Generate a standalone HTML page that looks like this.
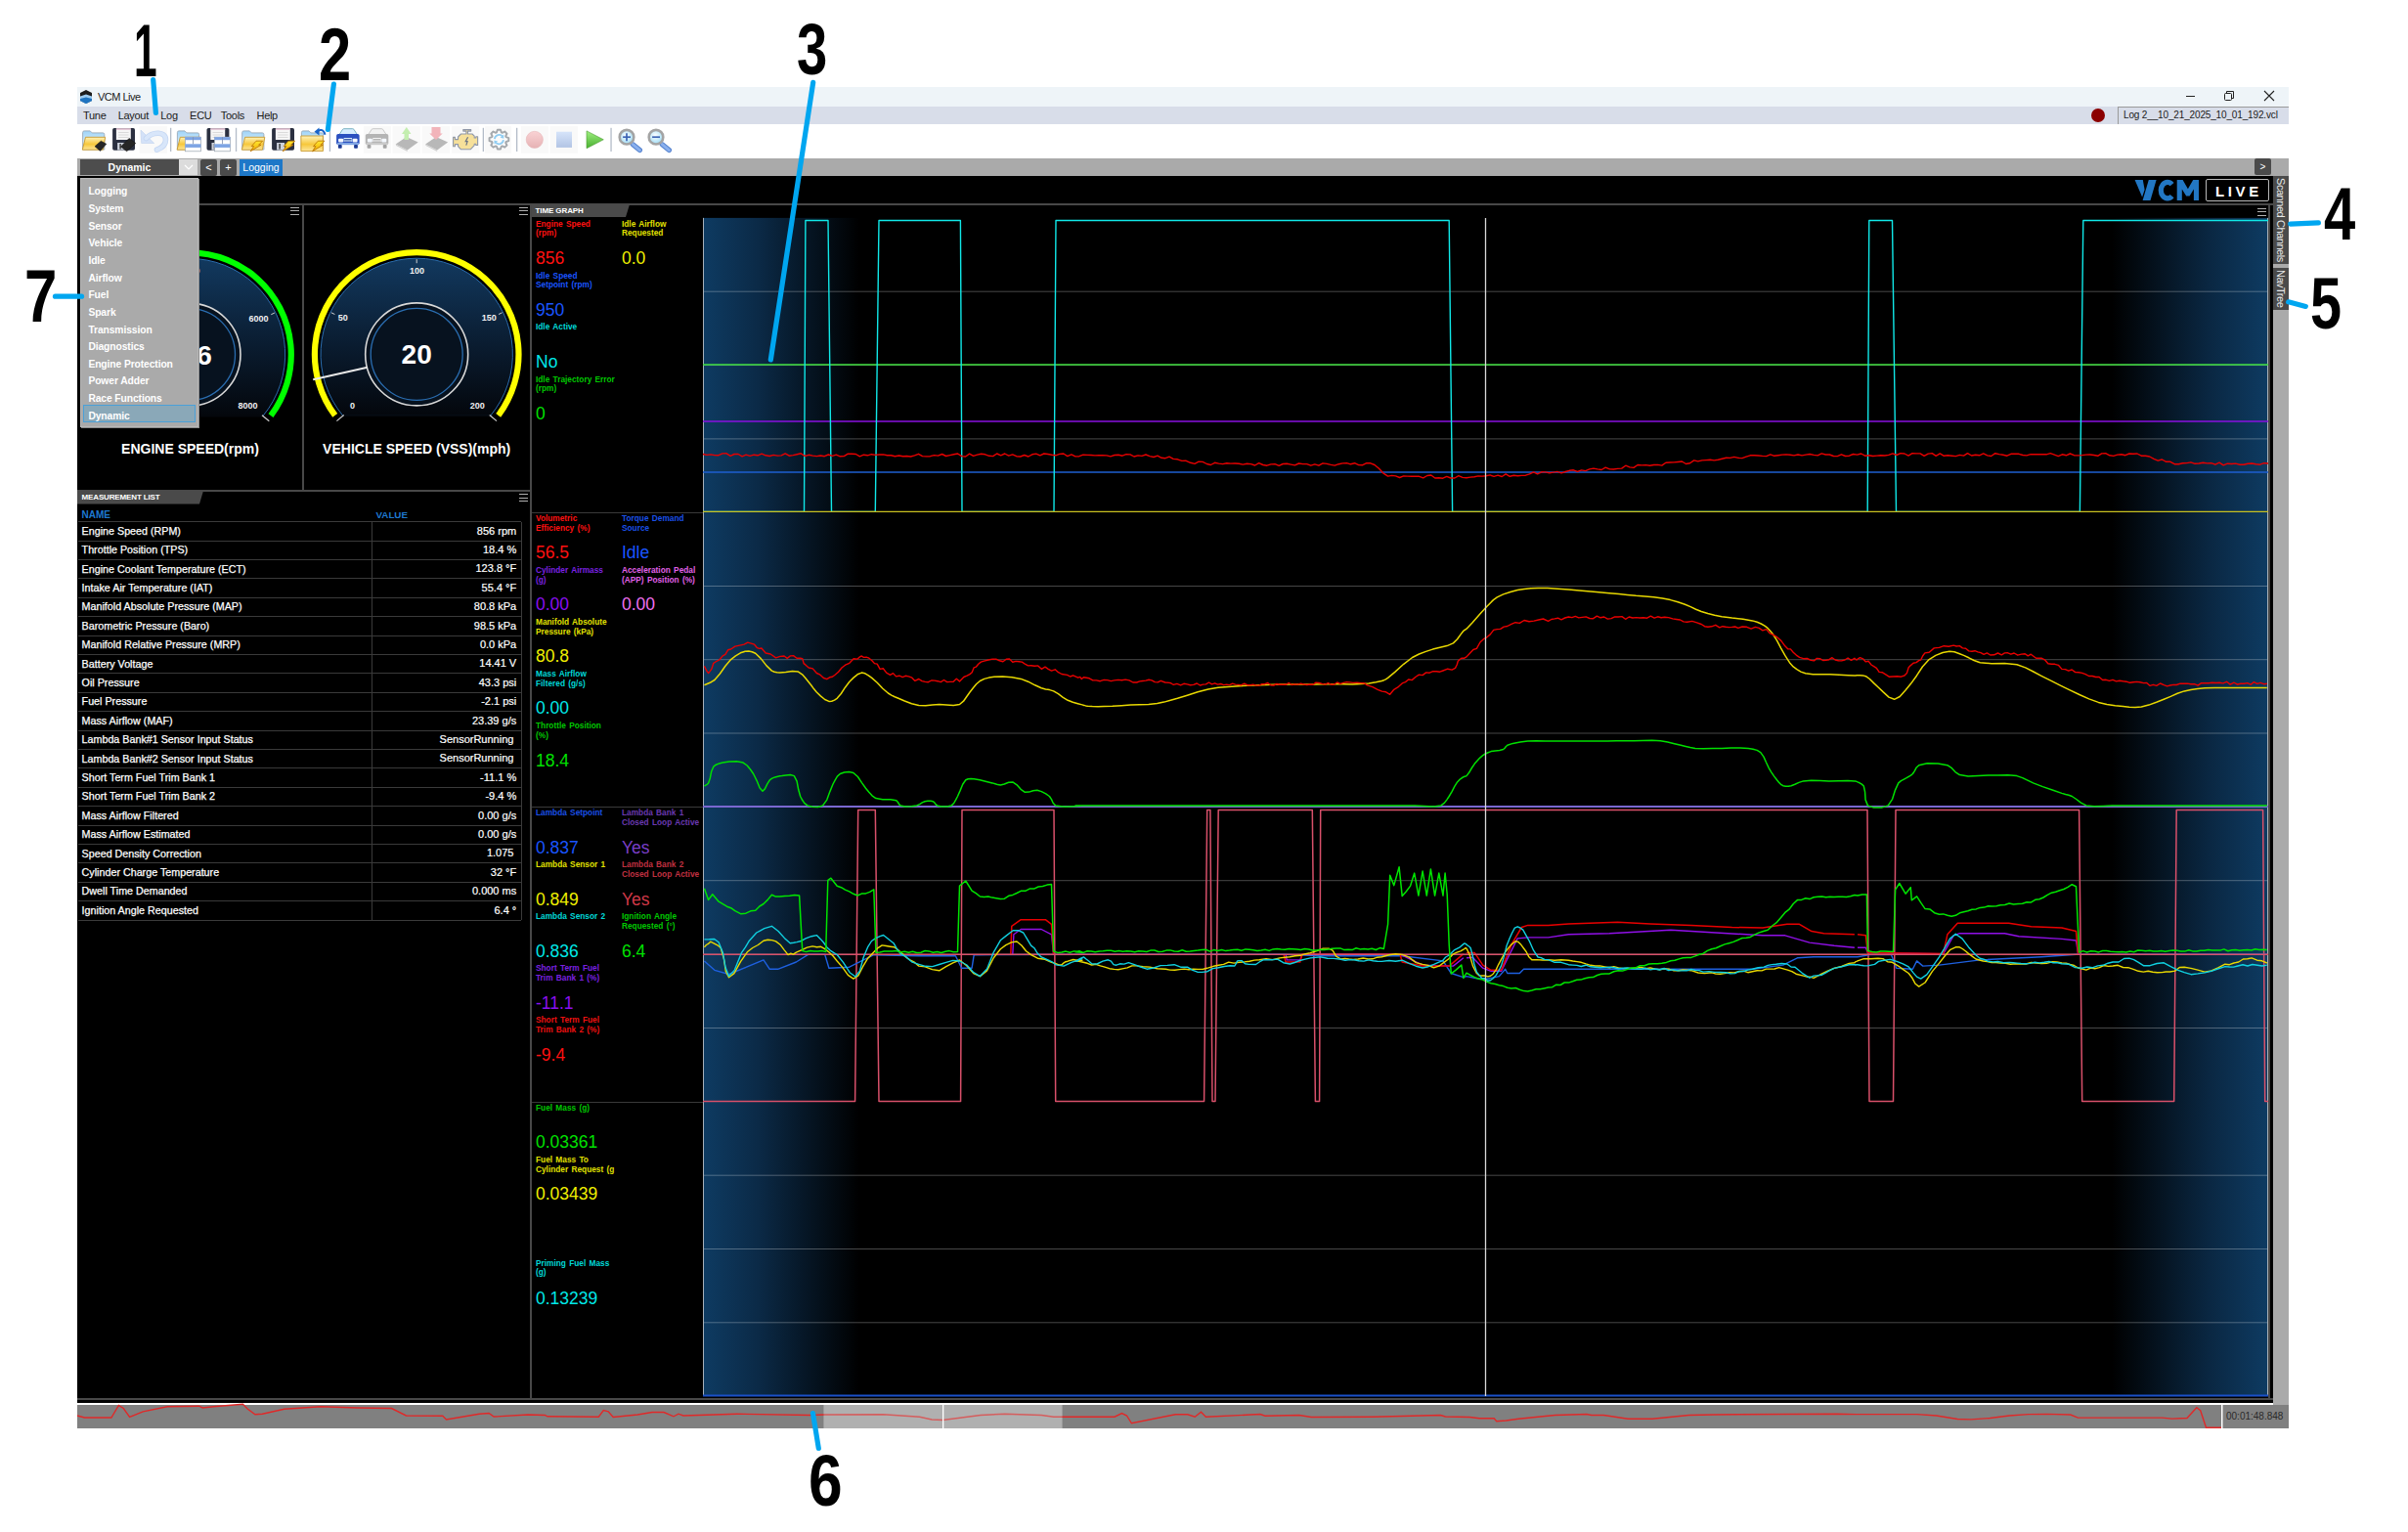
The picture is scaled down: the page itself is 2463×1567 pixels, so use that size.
<!DOCTYPE html><html><head><meta charset="utf-8"><title>VCM Live</title><style>
*{margin:0;padding:0;box-sizing:border-box}
html,body{width:2463px;height:1567px;overflow:hidden;background:#fff;font-family:"Liberation Sans", sans-serif}
.a{position:absolute}
.t{position:absolute;white-space:nowrap;line-height:1}
</style></head><body>
<div class="a" style="left:79px;top:89px;width:2262px;height:20px;background:#eef4f8;"></div>
<div class="a" style="left:79px;top:109px;width:2262px;height:18px;background:#d8dde9;"></div>
<div class="a" style="left:79px;top:127px;width:2262px;height:35px;background:#ffffff;"></div>
<div class="a" style="left:79px;top:162px;width:2262px;height:18px;background:#aaaaaa;"></div>
<div class="a" style="left:79px;top:180px;width:2246px;height:1255px;background:#000;"></div>
<div class="a" style="left:2325px;top:180px;width:16px;height:1257px;background:#aaaaaa;"></div>
<div class="a" style="left:79px;top:1435px;width:2246px;height:2px;background:#ffffff;"></div>
<div class="a" style="left:79px;top:1437px;width:2262px;height:24px;background:#808080;"></div>
<svg class="a" style="left:81px;top:92px" width="14" height="14" viewBox="0 0 14 14"><polygon points="7,0 13,3 13,11 7,14 1,11 1,3" fill="#1c1c1c"/><polygon points="1,6.5 7,4.5 13,6.5 13,11 7,14 1,11" fill="#9ccbf0"/><polygon points="1,9 7,7.5 13,9 13,11 7,14 1,11" fill="#1f74c0"/></svg>
<div class="t" style="left:100.0px;top:94.2px;font-size:11px;color:#1a1a1a;font-weight:400;letter-spacing:-0.5px;">VCM Live</div>
<div class="a" style="left:2236px;top:98px;width:9px;height:1px;background:#222;"></div>
<svg class="a" style="left:2274px;top:92px" width="12" height="12" viewBox="0 0 12 12"><rect x="1.5" y="3.5" width="7" height="7" rx="1" fill="none" stroke="#222" stroke-width="1"/><path d="M3.5 3.5V1.5H10.5V8.5H8.5" fill="none" stroke="#222" stroke-width="1"/></svg>
<svg class="a" style="left:2315px;top:92px" width="12" height="12" viewBox="0 0 12 12"><path d="M1 1L11 11M11 1L1 11" stroke="#222" stroke-width="1.1"/></svg>
<div class="t" style="left:85.0px;top:112.6px;font-size:11px;color:#1a1a1a;font-weight:400;letter-spacing:-0.3px;">Tune</div>
<div class="t" style="left:120.7px;top:112.6px;font-size:11px;color:#1a1a1a;font-weight:400;letter-spacing:-0.3px;">Layout</div>
<div class="t" style="left:164.3px;top:112.6px;font-size:11px;color:#1a1a1a;font-weight:400;letter-spacing:-0.3px;">Log</div>
<div class="t" style="left:194.1px;top:112.6px;font-size:11px;color:#1a1a1a;font-weight:400;letter-spacing:-0.3px;">ECU</div>
<div class="t" style="left:225.8px;top:112.6px;font-size:11px;color:#1a1a1a;font-weight:400;letter-spacing:-0.3px;">Tools</div>
<div class="t" style="left:262.5px;top:112.6px;font-size:11px;color:#1a1a1a;font-weight:400;letter-spacing:-0.3px;">Help</div>
<div class="a" style="left:2139px;top:111px;width:14px;height:14px;border-radius:50%;background:#8b0000"></div>
<div class="a" style="left:2166px;top:109px;width:175px;height:18px;border-left:1px solid #9a9a9a;border-top:1px solid #9a9a9a;background:#d8dde9"></div>
<div class="t" style="left:2172.0px;top:113.0px;font-size:10px;color:#1a1a1a;font-weight:400;letter-spacing:-0.15px;">Log 2__10_21_2025_10_01_192.vcl</div>
<svg class="a" style="left:0;top:0" width="720" height="170" viewBox="0 0 720 170"><defs><linearGradient id="fy" x1="0" y1="0" x2="0" y2="1"><stop offset="0" stop-color="#fff2b8"/><stop offset="0.55" stop-color="#f7c83c"/><stop offset="1" stop-color="#fde69a"/></linearGradient><linearGradient id="fb" x1="0" y1="0" x2="0" y2="1"><stop offset="0" stop-color="#9fd4f8"/><stop offset="1" stop-color="#f2f8fd"/></linearGradient><linearGradient id="bolt" x1="0" y1="0" x2="0" y2="1"><stop offset="0" stop-color="#ffe830"/><stop offset="1" stop-color="#f0a800"/></linearGradient><linearGradient id="rg" x1="0" y1="0" x2="0" y2="1"><stop offset="0" stop-color="#f9d2d4"/><stop offset="1" stop-color="#e6b2b4"/></linearGradient><linearGradient id="bq" x1="0" y1="0" x2="0" y2="1"><stop offset="0" stop-color="#d6e4fa"/><stop offset="1" stop-color="#b2c4e4"/></linearGradient><linearGradient id="gg" x1="0" y1="0" x2="0" y2="1"><stop offset="0" stop-color="#a0f080"/><stop offset="1" stop-color="#48b030"/></linearGradient><radialGradient id="lens" cx="0.45" cy="0.4" r="0.6"><stop offset="0" stop-color="#ffffff"/><stop offset="1" stop-color="#9edcf6"/></radialGradient></defs><rect x="142.7" y="129.2" width="28.4" height="27.6" fill="#f9f9f9"/><rect x="372" y="129.2" width="28.0" height="27.6" fill="#f9f9f9"/><rect x="401.5" y="129.2" width="28.5" height="27.6" fill="#f9f9f9"/><rect x="431.6" y="129.2" width="28.4" height="27.6" fill="#f9f9f9"/><rect x="462" y="129.2" width="28.4" height="27.6" fill="#f9f9f9"/><rect x="496" y="129.2" width="27.0" height="27.6" fill="#f9f9f9"/><rect x="532.9" y="129.2" width="28.0" height="27.6" fill="#f9f9f9"/><rect x="562.5" y="129.2" width="28.4" height="27.6" fill="#f9f9f9"/><rect x="174.0" y="130.8" width="1.3" height="24.2" fill="#b4bcc8"/><rect x="240.9" y="130.8" width="1.3" height="24.2" fill="#b4bcc8"/><rect x="336.8" y="130.8" width="1.3" height="24.2" fill="#b4bcc8"/><rect x="493.7" y="130.8" width="1.3" height="24.2" fill="#b4bcc8"/><rect x="528.0" y="130.8" width="1.3" height="24.2" fill="#b4bcc8"/><rect x="624.4" y="130.8" width="1.3" height="24.2" fill="#b4bcc8"/><path d="M84.6,135.5 q0,-1.6 1.6,-1.6 h6 l2,2 h11 q1.6,0 1.6,1.6 v15.5 h-22.2 z" fill="url(#fb)" stroke="#98a8b8" stroke-width="0.9"/><path d="M87.5,140.3 h20.2 l-2.4,12.9 h-21 z" fill="url(#fy)" stroke="#c89a30" stroke-width="0.9"/><polygon points="97,149.7 103.3,144.2 108.8,147.3 102.5,154.4" fill="#262626" stroke="#111" stroke-width="0.5"/><rect x="115.1" y="131" width="22.9" height="22.8" rx="1.8" fill="#2b3040"/><rect x="118.89999999999999" y="131.4" width="14.9" height="11.6" fill="#f6f6f6"/><rect x="118.89999999999999" y="131.4" width="14.9" height="1.3" fill="#dcb4c8"/><path d="M121.1,135.5h10.5M121.1,138h10.5M121.1,140.5h10.5" stroke="#cfcfcf" stroke-width="0.7"/><rect x="120.1" y="146" width="8" height="7.5" fill="#cdd2dc"/><rect x="122.3" y="147" width="1.6" height="5.5" fill="#444"/><polygon points="123.4,150.1 132.1,141.4 138.8,146.5 129.7,154.8" fill="#262626" stroke="#111" stroke-width="0.5"/><polygon points="144,133.1 144.7,146.5 157.7,146.5" fill="#d4e2f8" stroke="#c0d2ee" stroke-width="0.6"/><path d="M149.5,141.5 C156,134.5 169.5,134 169.5,143 C169.5,148 165,151.5 160.5,153.2" fill="none" stroke="#c4d6f2" stroke-width="5.6" stroke-linecap="round"/><path d="M149.5,141.5 C156,134.5 169.5,134 169.5,143 C169.5,148 165,151.5 160.5,153.2" fill="none" stroke="#d8e6fa" stroke-width="4" stroke-linecap="round"/><path d="M181.4,135.5 q0,-1.6 1.6,-1.6 h6 l2,2 h11 q1.6,0 1.6,1.6 v15.5 h-22.2 z" fill="url(#fb)" stroke="#98a8b8" stroke-width="0.9"/><path d="M184.3,140.3 h20.2 l-2.4,12.9 h-21 z" fill="url(#fy)" stroke="#c89a30" stroke-width="0.9"/><rect x="189.4" y="140.2" width="16" height="14.6" fill="#fdfdfd" stroke="#9aa4b0" stroke-width="0.7"/><rect x="189.4" y="140.2" width="16" height="3" fill="#7da4e4"/><rect x="189.4" y="147.3" width="16" height="3.6" fill="#7da4e4"/><rect x="197.0" y="140.2" width="0.8" height="7.1" fill="#8090b0"/><rect x="211.5" y="131" width="22.9" height="22.8" rx="1.8" fill="#2b3040"/><rect x="215.3" y="131.4" width="14.9" height="11.6" fill="#f6f6f6"/><rect x="215.3" y="131.4" width="14.9" height="1.3" fill="#dcb4c8"/><path d="M217.5,135.5h10.5M217.5,138h10.5M217.5,140.5h10.5" stroke="#cfcfcf" stroke-width="0.7"/><rect x="216.5" y="146" width="8" height="7.5" fill="#cdd2dc"/><rect x="218.7" y="147" width="1.6" height="5.5" fill="#444"/><rect x="219.4" y="140.2" width="16" height="14.6" fill="#fdfdfd" stroke="#9aa4b0" stroke-width="0.7"/><rect x="219.4" y="140.2" width="16" height="3" fill="#7da4e4"/><rect x="219.4" y="147.3" width="16" height="3.6" fill="#7da4e4"/><rect x="227.0" y="140.2" width="0.8" height="7.1" fill="#8090b0"/><path d="M247.7,135.5 q0,-1.6 1.6,-1.6 h6 l2,2 h11 q1.6,0 1.6,1.6 v15.5 h-22.2 z" fill="url(#fb)" stroke="#98a8b8" stroke-width="0.9"/><path d="M250.6,140.3 h20.2 l-2.4,12.9 h-21 z" fill="url(#fy)" stroke="#c89a30" stroke-width="0.9"/><polygon points="262.0,144.2 268.6,144.2 264.6,148.2 267.0,148.2 256.2,154.8 259.6,149.6 257.2,149.6" fill="url(#bolt)" stroke="#b87000" stroke-width="0.8" stroke-linejoin="round"/><rect x="278.1" y="131" width="22.9" height="22.8" rx="1.8" fill="#2b3040"/><rect x="281.90000000000003" y="131.4" width="14.9" height="11.6" fill="#f6f6f6"/><rect x="281.90000000000003" y="131.4" width="14.9" height="1.3" fill="#dcb4c8"/><path d="M284.1,135.5h10.5M284.1,138h10.5M284.1,140.5h10.5" stroke="#cfcfcf" stroke-width="0.7"/><rect x="283.1" y="146" width="8" height="7.5" fill="#cdd2dc"/><rect x="285.3" y="147" width="1.6" height="5.5" fill="#444"/><polygon points="295.0,144.2 301.6,144.2 297.6,148.2 300.0,148.2 289.2,154.8 292.6,149.6 290.2,149.6" fill="url(#bolt)" stroke="#b87000" stroke-width="0.8" stroke-linejoin="round"/><path d="M308.4,135.5 q0,-1.6 1.6,-1.6 h6 l2,2 h11 q1.6,0 1.6,1.6 v15.5 h-22.2 z" fill="url(#fb)" stroke="#98a8b8" stroke-width="0.9"/><path d="M307.9,139 h22.5 v15.6 h-22.5 z" fill="url(#fy)" stroke="#c89a30" stroke-width="0.9"/><polygon points="325.3,144.2 331.9,144.2 327.9,148.2 330.3,148.2 319.5,154.8 322.9,149.6 320.5,149.6" fill="url(#bolt)" stroke="#b87000" stroke-width="0.8" stroke-linejoin="round"/><path d="M324.5,135.5 C326,132 331,131.5 332.5,137.8" fill="none" stroke="#1a64c8" stroke-width="2"/><polygon points="321.5,134.8 326.5,130.4 326.5,138.4" fill="#1a64c8"/><path d="M347.1,137.5 l3.4,-5.2 q0.5,-0.6 1.3,-0.6 h8.8 q0.8,0 1.3,0.6 l3.4,5.2 z" fill="#d6ecff" stroke="#5aa0b0" stroke-width="0.8"/><rect x="344.1" y="137" width="23.5" height="11" rx="1.8" fill="#2b50c0"/><rect x="351.6" y="141" width="8.5" height="4" fill="#d6ecff"/><path d="M352.1,142.5h7.5M352.1,144h7.5" stroke="#1c3a94" stroke-width="0.8"/><rect x="346.1" y="141.8" width="5" height="3.6" rx="1" fill="#f4f8ff"/><rect x="360.6" y="141.8" width="5" height="3.6" rx="1" fill="#f4f8ff"/><rect x="344.90000000000003" y="146" width="22" height="2.2" fill="#80a6e4"/><rect x="345.90000000000003" y="148" width="3.8" height="3.8" rx="0.8" fill="#1c3a94"/><rect x="362.1" y="148" width="3.8" height="3.8" rx="0.8" fill="#1c3a94"/><path d="M376.8,137.5 l3.4,-5.2 q0.5,-0.6 1.3,-0.6 h8.8 q0.8,0 1.3,0.6 l3.4,5.2 z" fill="#f2f2f2" stroke="#bdbdbd" stroke-width="0.8"/><rect x="373.8" y="137" width="23.5" height="11" rx="1.8" fill="#b4b4b4"/><rect x="381.3" y="141" width="8.5" height="4" fill="#f2f2f2"/><path d="M381.8,142.5h7.5M381.8,144h7.5" stroke="#a4a4a4" stroke-width="0.8"/><rect x="375.8" y="141.8" width="5" height="3.6" rx="1" fill="#f4f8ff"/><rect x="390.3" y="141.8" width="5" height="3.6" rx="1" fill="#f4f8ff"/><rect x="374.6" y="146" width="22" height="2.2" fill="#cacaca"/><rect x="375.6" y="148" width="3.8" height="3.8" rx="0.8" fill="#a4a4a4"/><rect x="391.8" y="148" width="3.8" height="3.8" rx="0.8" fill="#a4a4a4"/><polygon points="404.7,147.5 415.7,140 427.7,145.5 416.7,153.6" fill="#b8b8b8"/><polygon points="404.7,147.5 416.7,153.6 416.7,155 405.2,149" fill="#d0d0d0"/><polygon points="411,137 415.8,130 420.5,137 418,137 418,143 413.5,143 413.5,137" fill="#c4eeb0"/><polygon points="435.1,147.5 446.1,140 458.1,145.5 447.1,153.6" fill="#b8b8b8"/><polygon points="435.1,147.5 447.1,153.6 447.1,155 435.6,149" fill="#d0d0d0"/><polygon points="441.5,130 450.5,130 450.5,136.5 452.7,136.5 446,143 439.3,136.5 441.5,136.5" fill="#f2b4ba"/><path d="M473.8,132.6 H481.7 V134.1 H478.5 V137 H483 L485.2,139.2 V141 H486.8 V139.8 H488.6 V148.5 H486.8 V147.3 H485.2 V148.6 L481.2,152.8 H471.5 L468.5,149.6 V147.6 H465.4 V149.8 H463.6 V140.4 H465.4 V142.6 H468.5 V140 L471.5,137 H476.9 V134.1 H473.8 Z" fill="#f6e09a" stroke="#9098a8" stroke-width="1.1" stroke-linejoin="round"/><path d="M478.6,140.2 l-2.4,4.4 h1.9 l-1.3,4" fill="none" stroke="#6c7484" stroke-width="1.2"/><polygon points="517.61,140.19 520.28,141.04 520.28,144.16 517.61,145.01 517.20,145.99 518.49,148.48 516.28,150.69 513.79,149.40 512.81,149.81 511.96,152.48 508.84,152.48 507.99,149.81 507.01,149.40 504.52,150.69 502.31,148.48 503.60,145.99 503.19,145.01 500.52,144.16 500.52,141.04 503.19,140.19 503.60,139.21 502.31,136.72 504.52,134.51 507.01,135.80 507.99,135.39 508.84,132.72 511.96,132.72 512.81,135.39 513.79,135.80 516.28,134.51 518.49,136.72 517.20,139.21" fill="#fbfbfb" stroke="#a4a8ac" stroke-width="1.9" stroke-linejoin="round"/><path d="M505.9,142.1 a4.6,4.6 0 0 1 8.2,-2.4" fill="none" stroke="#90cdf2" stroke-width="1.8"/><polygon points="515.1999999999999,137.6 515.4,141.79999999999998 511.59999999999997,140.79999999999998" fill="#90cdf2"/><path d="M514.9,143.1 a4.6,4.6 0 0 1 -8.2,2.4" fill="none" stroke="#90cdf2" stroke-width="1.8"/><polygon points="505.59999999999997,147.6 505.4,143.4 509.2,144.4" fill="#90cdf2"/><circle cx="546.8" cy="142.9" r="8.6" fill="url(#rg)" stroke="#e2b0b2" stroke-width="0.5"/><rect x="569" y="134.7" width="16" height="16.2" fill="url(#bq)"/><polygon points="600,133.9 617.3,142.8 600,151.7" fill="url(#gg)" stroke="#4a9a30" stroke-width="0.6" stroke-linejoin="round"/><path d="M647.3,147.7 L654.4,153.6" stroke="#5a86d0" stroke-width="5.2" stroke-linecap="round"/><path d="M647.3,147.7 L654.4,153.6" stroke="#8ab0ee" stroke-width="3" stroke-linecap="round"/><circle cx="641" cy="140.2" r="7.3" fill="url(#lens)" stroke="#a4a4a4" stroke-width="2.6"/><path d="M637.1,140.2h7.9" stroke="#3c64b4" stroke-width="1.7"/><path d="M641,136.3v7.9" stroke="#3c64b4" stroke-width="1.7"/><path d="M677.3,147.7 L684.4,153.6" stroke="#5a86d0" stroke-width="5.2" stroke-linecap="round"/><path d="M677.3,147.7 L684.4,153.6" stroke="#8ab0ee" stroke-width="3" stroke-linecap="round"/><circle cx="671" cy="140.2" r="7.3" fill="url(#lens)" stroke="#a4a4a4" stroke-width="2.6"/><path d="M667.1,140.2h7.9" stroke="#3c64b4" stroke-width="1.7"/></svg>
<div class="a" style="left:82px;top:163px;width:101px;height:16px;background:#4d4d4d;"></div>
<div class="t" style="left:132.5px;transform:translateX(-50%);top:166.2px;font-size:10.5px;color:#fff;font-weight:700;letter-spacing:0px;">Dynamic</div>
<div class="a" style="left:183px;top:163px;width:19px;height:16px;background:#dcdcdc;"></div>
<svg class="a" style="left:188px;top:168px" width="10" height="6" viewBox="0 0 10 6"><path d="M1 1l4 4 4-4" fill="none" stroke="#fff" stroke-width="1.2"/></svg>
<div class="a" style="left:205px;top:163px;width:17px;height:17px;background:#4a4a4a;border-radius:2px"></div>
<div class="t" style="left:213.5px;transform:translateX(-50%);top:166.2px;font-size:11px;color:#fff;font-weight:400;letter-spacing:0px;">&lt;</div>
<div class="a" style="left:225px;top:163px;width:17px;height:17px;background:#4a4a4a;border-radius:2px"></div>
<div class="t" style="left:233.5px;transform:translateX(-50%);top:166.2px;font-size:11px;color:#fff;font-weight:400;letter-spacing:0px;">+</div>
<div class="a" style="left:245px;top:163px;width:44px;height:17px;background:#1e78c8;"></div>
<div class="t" style="left:248.3px;top:166.2px;font-size:10.5px;color:#fff;font-weight:400;letter-spacing:0px;">Logging</div>
<div class="a" style="left:2306px;top:162px;width:17px;height:17px;background:#4a4a4a;border-radius:2px"></div>
<div class="t" style="left:2314.5px;transform:translateX(-50%);top:166.2px;font-size:10px;color:#fff;font-weight:400;letter-spacing:0px;">&gt;</div>
<div class="a" style="left:2325px;top:180px;width:16px;height:90px;background:#4a4a4a;"></div>
<div class="a" style="left:2325px;top:274px;width:16px;height:43px;background:#4a4a4a;"></div>
<div class="t" style="left:2327px;top:182px;font-size:11px;color:#e8e8e8;writing-mode:vertical-rl;letter-spacing:-0.45px">Scanned Channels</div>
<div class="t" style="left:2327px;top:276px;font-size:11px;color:#e8e8e8;writing-mode:vertical-rl;letter-spacing:-0.5px">NavTree</div>
<svg class="a" style="left:0;top:0" width="2463" height="220" viewBox="0 0 2463 220"><polygon points="2183.6,184.1 2191.8,184.1 2193.6,194 2191.1,201.6" fill="#2277c4"/><polygon points="2197.8,184.1 2205.6,184.1 2199.5,205 2191.6,205" fill="#2277c4"/><path d="M2221.6,188.6 A6.7,8.3 0 1 0 2221.6,200.6" fill="none" stroke="#2277c4" stroke-width="5.2"/><polygon points="2226.7,205 2226.7,184.1 2232.6,184.1 2237.9,193.2 2243.2,184.1 2249,184.1 2249,205 2243.9,205 2243.9,193.5 2239.6,200.6 2236.2,200.6 2231.8,193.5 2231.8,205" fill="#2277c4"/></svg>
<div class="a" style="left:2256px;top:183px;width:65px;height:23px;border:1.5px solid #b8b8b8;border-radius:2px"></div>
<div class="t" style="left:2266.0px;top:187.6px;font-size:15px;color:#fff;font-weight:700;letter-spacing:3.6px;">LIVE</div>
<div class="a" style="left:79px;top:208px;width:2246px;height:2px;background:#484848;"></div>
<div class="a" style="left:309px;top:208px;width:2px;height:294px;background:#484848;"></div>
<div class="a" style="left:542px;top:208px;width:2px;height:1224px;background:#484848;"></div>
<div class="a" style="left:79px;top:501px;width:464px;height:2px;background:#484848;"></div>
<div class="a" style="left:79px;top:1430px;width:2246px;height:2px;background:#484848;"></div>
<div class="a" style="left:2320px;top:208px;width:2px;height:1224px;background:#484848;"></div>
<div class="a" style="left:297px;top:211.5px;width:9px;height:1.3px;background:#b0b0b0;"></div>
<div class="a" style="left:297px;top:215.1px;width:9px;height:1.3px;background:#b0b0b0;"></div>
<div class="a" style="left:297px;top:218.7px;width:9px;height:1.3px;background:#b0b0b0;"></div>
<div class="a" style="left:531px;top:211.5px;width:9px;height:1.3px;background:#b0b0b0;"></div>
<div class="a" style="left:531px;top:215.1px;width:9px;height:1.3px;background:#b0b0b0;"></div>
<div class="a" style="left:531px;top:218.7px;width:9px;height:1.3px;background:#b0b0b0;"></div>
<div class="a" style="left:531px;top:505.0px;width:9px;height:1.3px;background:#b0b0b0;"></div>
<div class="a" style="left:531px;top:508.6px;width:9px;height:1.3px;background:#b0b0b0;"></div>
<div class="a" style="left:531px;top:512.2px;width:9px;height:1.3px;background:#b0b0b0;"></div>
<div class="a" style="left:2309px;top:212.5px;width:9px;height:1.3px;background:#b0b0b0;"></div>
<div class="a" style="left:2309px;top:216.1px;width:9px;height:1.3px;background:#b0b0b0;"></div>
<div class="a" style="left:2309px;top:219.7px;width:9px;height:1.3px;background:#b0b0b0;"></div>
<svg class="a" style="left:544px;top:209px" width="100" height="14"><path d="M0 0H100L96 13H0z" fill="#4a4a4a"/></svg>
<div class="t" style="left:547.5px;top:212.1px;font-size:8px;color:#fff;font-weight:700;letter-spacing:-0.1px;">TIME GRAPH</div>
<svg class="a" style="left:79px;top:502px" width="130" height="14"><path d="M0 0H129L125 13.5H0z" fill="#4a4a4a"/></svg>
<div class="t" style="left:83.6px;top:504.7px;font-size:8px;color:#fff;font-weight:700;letter-spacing:-0.15px;">MEASUREMENT LIST</div>
<svg class="a" style="left:0;top:0" width="2463" height="600" viewBox="0 0 2463 600"><defs><linearGradient id="dg426" x1="0" y1="0" x2="0" y2="1"><stop offset="0" stop-color="#12395f"/><stop offset="0.55" stop-color="#0a1c30"/><stop offset="1" stop-color="#04070c"/></linearGradient></defs><path d="M350.8,425.3 A98.2,98.2 0 1 1 501.6,425.3 Z" fill="url(#dg426)" stroke="#2a6db0" stroke-width="1"/><path d="M350.8,425.3 L501.6,425.3" stroke="#04070c" stroke-width="2"/><path d="M342.7,424.9 A104.3,104.3 0 1 1 509.7,424.9" fill="none" stroke="#ffff00" stroke-width="6.2"/><path d="M351.7,424.5 L344.4,430.6" stroke="#cfcfcf" stroke-width="1.2"/><path d="M500.7,424.5 L508.0,430.6" stroke="#cfcfcf" stroke-width="1.2"/><path d="M426.2,265.2 L426.2,269.2" stroke="#cfcfcf" stroke-width="1"/><path d="M338.8,319.8 L342.4,321.5" stroke="#cfcfcf" stroke-width="1"/><path d="M513.6,319.8 L510.0,321.5" stroke="#cfcfcf" stroke-width="1"/><circle cx="426.2" cy="362.4" r="52.5" fill="#07121f" stroke="#d8d8d8" stroke-width="1.6"/><circle cx="426.2" cy="362.4" r="47" fill="none" stroke="#2a6db0" stroke-width="1.3"/><path d="M320.2,388.2 L375.8,375.7" stroke="#e8e8e8" stroke-width="2"/></svg>
<div class="t" style="left:426.5px;transform:translateX(-50%);top:273.2px;font-size:9px;color:#f0f0f0;font-weight:700;letter-spacing:0px;">100</div>
<div class="t" style="left:350.7px;transform:translateX(-50%);top:320.7px;font-size:9px;color:#f0f0f0;font-weight:700;letter-spacing:0px;">50</div>
<div class="t" style="left:500.3px;transform:translateX(-50%);top:320.7px;font-size:9px;color:#f0f0f0;font-weight:700;letter-spacing:0px;">150</div>
<div class="t" style="left:360.4px;transform:translateX(-50%);top:411.0px;font-size:9px;color:#f0f0f0;font-weight:700;letter-spacing:0px;">0</div>
<div class="t" style="left:488.3px;transform:translateX(-50%);top:411.0px;font-size:9px;color:#f0f0f0;font-weight:700;letter-spacing:0px;">200</div>
<div class="t" style="left:426.2px;transform:translateX(-50%);top:349.4px;font-size:28px;color:#fff;font-weight:700;letter-spacing:0px;">20</div>
<div class="t" style="left:426.2px;transform:translateX(-50%);top:451.6px;font-size:14px;color:#fff;font-weight:700;letter-spacing:0px;">VEHICLE SPEED (VSS)(mph)</div>
<svg class="a" style="left:0;top:0" width="2463" height="600" viewBox="0 0 2463 600"><defs><linearGradient id="dg193" x1="0" y1="0" x2="0" y2="1"><stop offset="0" stop-color="#12395f"/><stop offset="0.55" stop-color="#0a1c30"/><stop offset="1" stop-color="#04070c"/></linearGradient></defs><path d="M118.1,425.5 A98.2,98.2 0 1 1 268.9,425.5 Z" fill="url(#dg193)" stroke="#2a6db0" stroke-width="1"/><path d="M118.1,425.5 L268.9,425.5" stroke="#04070c" stroke-width="2"/><path d="M110.0,425.1 A104.3,104.3 0 1 1 277.0,425.1" fill="none" stroke="#00ff00" stroke-width="6.2"/><path d="M119.0,424.7 L111.7,430.8" stroke="#cfcfcf" stroke-width="1.2"/><path d="M268.0,424.7 L275.3,430.8" stroke="#cfcfcf" stroke-width="1.2"/><path d="M193.5,265.4 L193.5,269.4" stroke="#cfcfcf" stroke-width="1"/><path d="M106.1,320.0 L109.7,321.7" stroke="#cfcfcf" stroke-width="1"/><path d="M280.9,320.0 L277.3,321.7" stroke="#cfcfcf" stroke-width="1"/><circle cx="193.5" cy="362.6" r="52.5" fill="#07121f" stroke="#d8d8d8" stroke-width="1.6"/><circle cx="193.5" cy="362.6" r="47" fill="none" stroke="#2a6db0" stroke-width="1.3"/><path d="M88.2,388.2 L143.8,375.7" stroke="#e8e8e8" stroke-width="2"/></svg>
<div class="t" style="left:194.5px;transform:translateX(-50%);top:273.2px;font-size:9px;color:#f0f0f0;font-weight:700;letter-spacing:0px;">4000</div>
<div class="t" style="left:118.7px;transform:translateX(-50%);top:320.7px;font-size:9px;color:#f0f0f0;font-weight:700;letter-spacing:0px;">2000</div>
<div class="t" style="left:264.4px;transform:translateX(-50%);top:322.0px;font-size:9px;color:#f0f0f0;font-weight:700;letter-spacing:0px;">6000</div>
<div class="t" style="left:128.4px;transform:translateX(-50%);top:411.0px;font-size:9px;color:#f0f0f0;font-weight:700;letter-spacing:0px;">0</div>
<div class="t" style="left:253.5px;transform:translateX(-50%);top:410.6px;font-size:9px;color:#f0f0f0;font-weight:700;letter-spacing:0px;">8000</div>
<div class="t" style="left:193.5px;transform:translateX(-50%);top:349.6px;font-size:28px;color:#fff;font-weight:700;letter-spacing:0px;">856</div>
<div class="t" style="left:194.5px;transform:translateX(-50%);top:451.6px;font-size:14px;color:#fff;font-weight:700;letter-spacing:0px;">ENGINE SPEED(rpm)</div>
<div class="t" style="left:83.6px;top:521.7px;font-size:10px;color:#1e78d0;font-weight:700;letter-spacing:0px;">NAME</div>
<div class="t" style="left:384.5px;top:521.8px;font-size:9.8px;color:#1e78d0;font-weight:700;letter-spacing:0px;">VALUE</div>
<div class="a" style="left:80px;top:533px;width:453px;height:1px;background:#3a3a3a;"></div>
<div class="t" style="left:83.6px;top:537.6px;font-size:10.7px;color:#fff;font-weight:400;letter-spacing:0.02px;-webkit-text-stroke:0.25px #fff">Engine Speed (RPM)</div>
<div class="t" style="right:1934.8px;top:537.5px;font-size:11px;color:#fff;font-weight:400;letter-spacing:0px;-webkit-text-stroke:0.2px #fff">856 rpm</div>
<div class="a" style="left:80px;top:553px;width:453px;height:1px;background:#3a3a3a;"></div>
<div class="t" style="left:83.6px;top:557.0px;font-size:10.7px;color:#fff;font-weight:400;letter-spacing:0.02px;-webkit-text-stroke:0.25px #fff">Throttle Position (TPS)</div>
<div class="t" style="right:1934.8px;top:556.9px;font-size:11px;color:#fff;font-weight:400;letter-spacing:0px;-webkit-text-stroke:0.2px #fff">18.4 %</div>
<div class="a" style="left:80px;top:572px;width:453px;height:1px;background:#3a3a3a;"></div>
<div class="t" style="left:83.6px;top:576.5px;font-size:10.7px;color:#fff;font-weight:400;letter-spacing:0.02px;-webkit-text-stroke:0.25px #fff">Engine Coolant Temperature (ECT)</div>
<div class="t" style="right:1934.8px;top:576.3px;font-size:11px;color:#fff;font-weight:400;letter-spacing:0px;-webkit-text-stroke:0.2px #fff">123.8 °F</div>
<div class="a" style="left:80px;top:591px;width:453px;height:1px;background:#3a3a3a;"></div>
<div class="t" style="left:83.6px;top:595.9px;font-size:10.7px;color:#fff;font-weight:400;letter-spacing:0.02px;-webkit-text-stroke:0.25px #fff">Intake Air Temperature (IAT)</div>
<div class="t" style="right:1934.8px;top:595.7px;font-size:11px;color:#fff;font-weight:400;letter-spacing:0px;-webkit-text-stroke:0.2px #fff">55.4 °F</div>
<div class="a" style="left:80px;top:611px;width:453px;height:1px;background:#3a3a3a;"></div>
<div class="t" style="left:83.6px;top:615.3px;font-size:10.7px;color:#fff;font-weight:400;letter-spacing:0.02px;-webkit-text-stroke:0.25px #fff">Manifold Absolute Pressure (MAP)</div>
<div class="t" style="right:1934.8px;top:615.1px;font-size:11px;color:#fff;font-weight:400;letter-spacing:0px;-webkit-text-stroke:0.2px #fff">80.8 kPa</div>
<div class="a" style="left:80px;top:630px;width:453px;height:1px;background:#3a3a3a;"></div>
<div class="t" style="left:83.6px;top:634.7px;font-size:10.7px;color:#fff;font-weight:400;letter-spacing:0.02px;-webkit-text-stroke:0.25px #fff">Barometric Pressure (Baro)</div>
<div class="t" style="right:1934.8px;top:634.5px;font-size:11px;color:#fff;font-weight:400;letter-spacing:0px;-webkit-text-stroke:0.2px #fff">98.5 kPa</div>
<div class="a" style="left:80px;top:650px;width:453px;height:1px;background:#3a3a3a;"></div>
<div class="t" style="left:83.6px;top:654.1px;font-size:10.7px;color:#fff;font-weight:400;letter-spacing:0.02px;-webkit-text-stroke:0.25px #fff">Manifold Relative Pressure (MRP)</div>
<div class="t" style="right:1934.8px;top:653.9px;font-size:11px;color:#fff;font-weight:400;letter-spacing:0px;-webkit-text-stroke:0.2px #fff">0.0 kPa</div>
<div class="a" style="left:80px;top:669px;width:453px;height:1px;background:#3a3a3a;"></div>
<div class="t" style="left:83.6px;top:673.5px;font-size:10.7px;color:#fff;font-weight:400;letter-spacing:0.02px;-webkit-text-stroke:0.25px #fff">Battery Voltage</div>
<div class="t" style="right:1934.8px;top:673.3px;font-size:11px;color:#fff;font-weight:400;letter-spacing:0px;-webkit-text-stroke:0.2px #fff">14.41 V</div>
<div class="a" style="left:80px;top:688px;width:453px;height:1px;background:#3a3a3a;"></div>
<div class="t" style="left:83.6px;top:692.9px;font-size:10.7px;color:#fff;font-weight:400;letter-spacing:0.02px;-webkit-text-stroke:0.25px #fff">Oil Pressure</div>
<div class="t" style="right:1934.8px;top:692.7px;font-size:11px;color:#fff;font-weight:400;letter-spacing:0px;-webkit-text-stroke:0.2px #fff">43.3 psi</div>
<div class="a" style="left:80px;top:708px;width:453px;height:1px;background:#3a3a3a;"></div>
<div class="t" style="left:83.6px;top:712.3px;font-size:10.7px;color:#fff;font-weight:400;letter-spacing:0.02px;-webkit-text-stroke:0.25px #fff">Fuel Pressure</div>
<div class="t" style="right:1934.8px;top:712.1px;font-size:11px;color:#fff;font-weight:400;letter-spacing:0px;-webkit-text-stroke:0.2px #fff">-2.1 psi</div>
<div class="a" style="left:80px;top:727px;width:453px;height:1px;background:#3a3a3a;"></div>
<div class="t" style="left:83.6px;top:731.7px;font-size:10.7px;color:#fff;font-weight:400;letter-spacing:0.02px;-webkit-text-stroke:0.25px #fff">Mass Airflow (MAF)</div>
<div class="t" style="right:1934.8px;top:731.5px;font-size:11px;color:#fff;font-weight:400;letter-spacing:0px;-webkit-text-stroke:0.2px #fff">23.39 g/s</div>
<div class="a" style="left:80px;top:747px;width:453px;height:1px;background:#3a3a3a;"></div>
<div class="t" style="left:83.6px;top:751.1px;font-size:10.7px;color:#fff;font-weight:400;letter-spacing:0.02px;-webkit-text-stroke:0.25px #fff">Lambda Bank#1 Sensor Input Status</div>
<div class="t" style="right:1937.6px;top:751.0px;font-size:11px;color:#fff;font-weight:400;letter-spacing:0px;-webkit-text-stroke:0.2px #fff">SensorRunning</div>
<div class="a" style="left:80px;top:766px;width:453px;height:1px;background:#3a3a3a;"></div>
<div class="t" style="left:83.6px;top:770.5px;font-size:10.7px;color:#fff;font-weight:400;letter-spacing:0.02px;-webkit-text-stroke:0.25px #fff">Lambda Bank#2 Sensor Input Status</div>
<div class="t" style="right:1937.6px;top:770.4px;font-size:11px;color:#fff;font-weight:400;letter-spacing:0px;-webkit-text-stroke:0.2px #fff">SensorRunning</div>
<div class="a" style="left:80px;top:785px;width:453px;height:1px;background:#3a3a3a;"></div>
<div class="t" style="left:83.6px;top:789.9px;font-size:10.7px;color:#fff;font-weight:400;letter-spacing:0.02px;-webkit-text-stroke:0.25px #fff">Short Term Fuel Trim Bank 1</div>
<div class="t" style="right:1934.8px;top:789.8px;font-size:11px;color:#fff;font-weight:400;letter-spacing:0px;-webkit-text-stroke:0.2px #fff">-11.1 %</div>
<div class="a" style="left:80px;top:805px;width:453px;height:1px;background:#3a3a3a;"></div>
<div class="t" style="left:83.6px;top:809.3px;font-size:10.7px;color:#fff;font-weight:400;letter-spacing:0.02px;-webkit-text-stroke:0.25px #fff">Short Term Fuel Trim Bank 2</div>
<div class="t" style="right:1934.8px;top:809.2px;font-size:11px;color:#fff;font-weight:400;letter-spacing:0px;-webkit-text-stroke:0.2px #fff">-9.4 %</div>
<div class="a" style="left:80px;top:824px;width:453px;height:1px;background:#3a3a3a;"></div>
<div class="t" style="left:83.6px;top:828.7px;font-size:10.7px;color:#fff;font-weight:400;letter-spacing:0.02px;-webkit-text-stroke:0.25px #fff">Mass Airflow Filtered</div>
<div class="t" style="right:1934.8px;top:828.6px;font-size:11px;color:#fff;font-weight:400;letter-spacing:0px;-webkit-text-stroke:0.2px #fff">0.00 g/s</div>
<div class="a" style="left:80px;top:844px;width:453px;height:1px;background:#3a3a3a;"></div>
<div class="t" style="left:83.6px;top:848.1px;font-size:10.7px;color:#fff;font-weight:400;letter-spacing:0.02px;-webkit-text-stroke:0.25px #fff">Mass Airflow Estimated</div>
<div class="t" style="right:1934.8px;top:848.0px;font-size:11px;color:#fff;font-weight:400;letter-spacing:0px;-webkit-text-stroke:0.2px #fff">0.00 g/s</div>
<div class="a" style="left:80px;top:863px;width:453px;height:1px;background:#3a3a3a;"></div>
<div class="t" style="left:83.6px;top:867.5px;font-size:10.7px;color:#fff;font-weight:400;letter-spacing:0.02px;-webkit-text-stroke:0.25px #fff">Speed Density Correction</div>
<div class="t" style="right:1937.6px;top:867.4px;font-size:11px;color:#fff;font-weight:400;letter-spacing:0px;-webkit-text-stroke:0.2px #fff">1.075</div>
<div class="a" style="left:80px;top:882px;width:453px;height:1px;background:#3a3a3a;"></div>
<div class="t" style="left:83.6px;top:886.9px;font-size:10.7px;color:#fff;font-weight:400;letter-spacing:0.02px;-webkit-text-stroke:0.25px #fff">Cylinder Charge Temperature</div>
<div class="t" style="right:1934.8px;top:886.8px;font-size:11px;color:#fff;font-weight:400;letter-spacing:0px;-webkit-text-stroke:0.2px #fff">32 °F</div>
<div class="a" style="left:80px;top:902px;width:453px;height:1px;background:#3a3a3a;"></div>
<div class="t" style="left:83.6px;top:906.3px;font-size:10.7px;color:#fff;font-weight:400;letter-spacing:0.02px;-webkit-text-stroke:0.25px #fff">Dwell Time Demanded</div>
<div class="t" style="right:1934.8px;top:906.2px;font-size:11px;color:#fff;font-weight:400;letter-spacing:0px;-webkit-text-stroke:0.2px #fff">0.000 ms</div>
<div class="a" style="left:80px;top:921px;width:453px;height:1px;background:#3a3a3a;"></div>
<div class="t" style="left:83.6px;top:925.7px;font-size:10.7px;color:#fff;font-weight:400;letter-spacing:0.02px;-webkit-text-stroke:0.25px #fff">Ignition Angle Requested</div>
<div class="t" style="right:1934.8px;top:925.6px;font-size:11px;color:#fff;font-weight:400;letter-spacing:0px;-webkit-text-stroke:0.2px #fff">6.4 °</div>
<div class="a" style="left:80px;top:941px;width:453px;height:1px;background:#3a3a3a;"></div>
<div class="a" style="left:380px;top:534px;width:1px;height:407px;background:#3a3a3a;"></div>
<div class="a" style="left:533px;top:534px;width:1px;height:407px;background:#3a3a3a;"></div>
<div class="a" style="left:79px;top:180px;width:3px;height:204px;background:#000;"></div>
<div class="a" style="left:82px;top:182px;width:121px;height:255px;background:#aaaaaa;border:1px solid #b8b8b8;box-shadow:1px 1px 0 #8a8a8a"></div>
<div class="t" style="left:90.4px;top:191.4px;font-size:10.3px;color:#fff;font-weight:700;letter-spacing:-0.1px;">Logging</div>
<div class="t" style="left:90.4px;top:209.1px;font-size:10.3px;color:#fff;font-weight:700;letter-spacing:-0.1px;">System</div>
<div class="t" style="left:90.4px;top:226.7px;font-size:10.3px;color:#fff;font-weight:700;letter-spacing:-0.1px;">Sensor</div>
<div class="t" style="left:90.4px;top:244.3px;font-size:10.3px;color:#fff;font-weight:700;letter-spacing:-0.1px;">Vehicle</div>
<div class="t" style="left:90.4px;top:262.0px;font-size:10.3px;color:#fff;font-weight:700;letter-spacing:-0.1px;">Idle</div>
<div class="t" style="left:90.4px;top:279.6px;font-size:10.3px;color:#fff;font-weight:700;letter-spacing:-0.1px;">Airflow</div>
<div class="t" style="left:90.4px;top:297.2px;font-size:10.3px;color:#fff;font-weight:700;letter-spacing:-0.1px;">Fuel</div>
<div class="t" style="left:90.4px;top:314.8px;font-size:10.3px;color:#fff;font-weight:700;letter-spacing:-0.1px;">Spark</div>
<div class="t" style="left:90.4px;top:332.5px;font-size:10.3px;color:#fff;font-weight:700;letter-spacing:-0.1px;">Transmission</div>
<div class="t" style="left:90.4px;top:350.1px;font-size:10.3px;color:#fff;font-weight:700;letter-spacing:-0.1px;">Diagnostics</div>
<div class="t" style="left:90.4px;top:367.7px;font-size:10.3px;color:#fff;font-weight:700;letter-spacing:-0.1px;">Engine Protection</div>
<div class="t" style="left:90.4px;top:385.4px;font-size:10.3px;color:#fff;font-weight:700;letter-spacing:-0.1px;">Power Adder</div>
<div class="t" style="left:90.4px;top:403.0px;font-size:10.3px;color:#fff;font-weight:700;letter-spacing:-0.1px;">Race Functions</div>
<div class="a" style="left:85px;top:414px;width:115px;height:18px;background:#8aa8b8;border:1px solid #4aa0d8"></div>
<div class="t" style="left:90.4px;top:420.6px;font-size:10.3px;color:#fff;font-weight:700;letter-spacing:-0.1px;">Dynamic</div>
<div class="t" style="left:548.0px;top:224.7px;font-size:8.3px;color:#ff1010;font-weight:700;letter-spacing:0px;word-spacing:1px">Engine Speed</div>
<div class="t" style="left:548.0px;top:234.4px;font-size:8.3px;color:#ff1010;font-weight:700;letter-spacing:0px;word-spacing:1px">(rpm)</div>
<div class="t" style="left:548.0px;top:255.6px;font-size:17.5px;color:#ff1010;font-weight:400;letter-spacing:0px;">856</div>
<div class="t" style="left:548.0px;top:277.5px;font-size:8.3px;color:#1a55ff;font-weight:700;letter-spacing:0px;word-spacing:1px">Idle Speed</div>
<div class="t" style="left:548.0px;top:287.2px;font-size:8.3px;color:#1a55ff;font-weight:700;letter-spacing:0px;word-spacing:1px">Setpoint (rpm)</div>
<div class="t" style="left:548.0px;top:308.6px;font-size:17.5px;color:#1a55ff;font-weight:400;letter-spacing:0px;">950</div>
<div class="t" style="left:548.0px;top:330.4px;font-size:8.3px;color:#00d8d8;font-weight:700;letter-spacing:0px;word-spacing:1px">Idle Active</div>
<div class="t" style="left:548.0px;top:361.6px;font-size:17.5px;color:#00e8e8;font-weight:400;letter-spacing:0px;">No</div>
<div class="t" style="left:548.0px;top:383.6px;font-size:8.3px;color:#00c800;font-weight:700;letter-spacing:0px;word-spacing:1px">Idle Trajectory Error</div>
<div class="t" style="left:548.0px;top:393.3px;font-size:8.3px;color:#00c800;font-weight:700;letter-spacing:0px;word-spacing:1px">(rpm)</div>
<div class="t" style="left:548.0px;top:414.6px;font-size:17.5px;color:#00e000;font-weight:400;letter-spacing:0px;">0</div>
<div class="t" style="left:636.0px;top:224.7px;font-size:8.3px;color:#e0e000;font-weight:700;letter-spacing:0px;word-spacing:1px">Idle Airflow</div>
<div class="t" style="left:636.0px;top:234.4px;font-size:8.3px;color:#e0e000;font-weight:700;letter-spacing:0px;word-spacing:1px">Requested</div>
<div class="t" style="left:636.0px;top:255.6px;font-size:17.5px;color:#f0f000;font-weight:400;letter-spacing:0px;">0.0</div>
<div class="t" style="left:548.0px;top:525.8px;font-size:8.3px;color:#ff1010;font-weight:700;letter-spacing:0px;word-spacing:1px">Volumetric</div>
<div class="t" style="left:548.0px;top:535.5px;font-size:8.3px;color:#ff1010;font-weight:700;letter-spacing:0px;word-spacing:1px">Efficiency (%)</div>
<div class="t" style="left:548.0px;top:557.2px;font-size:17.5px;color:#ff1010;font-weight:400;letter-spacing:0px;">56.5</div>
<div class="t" style="left:548.0px;top:578.8px;font-size:8.3px;color:#7a20e0;font-weight:700;letter-spacing:0px;word-spacing:1px">Cylinder Airmass</div>
<div class="t" style="left:548.0px;top:588.5px;font-size:8.3px;color:#7a20e0;font-weight:700;letter-spacing:0px;word-spacing:1px">(g)</div>
<div class="t" style="left:548.0px;top:610.0px;font-size:17.5px;color:#8a10f0;font-weight:400;letter-spacing:0px;">0.00</div>
<div class="t" style="left:548.0px;top:632.0px;font-size:8.3px;color:#e0e000;font-weight:700;letter-spacing:0px;word-spacing:1px">Manifold Absolute</div>
<div class="t" style="left:548.0px;top:641.7px;font-size:8.3px;color:#e0e000;font-weight:700;letter-spacing:0px;word-spacing:1px">Pressure (kPa)</div>
<div class="t" style="left:548.0px;top:663.2px;font-size:17.5px;color:#f0f000;font-weight:400;letter-spacing:0px;">80.8</div>
<div class="t" style="left:548.0px;top:684.9px;font-size:8.3px;color:#00d8d8;font-weight:700;letter-spacing:0px;word-spacing:1px">Mass Airflow</div>
<div class="t" style="left:548.0px;top:694.6px;font-size:8.3px;color:#00d8d8;font-weight:700;letter-spacing:0px;word-spacing:1px">Filtered (g/s)</div>
<div class="t" style="left:548.0px;top:716.0px;font-size:17.5px;color:#00e8e8;font-weight:400;letter-spacing:0px;">0.00</div>
<div class="t" style="left:548.0px;top:738.1px;font-size:8.3px;color:#00c800;font-weight:700;letter-spacing:0px;word-spacing:1px">Throttle Position</div>
<div class="t" style="left:548.0px;top:747.8px;font-size:8.3px;color:#00c800;font-weight:700;letter-spacing:0px;word-spacing:1px">(%)</div>
<div class="t" style="left:548.0px;top:769.5px;font-size:17.5px;color:#00e000;font-weight:400;letter-spacing:0px;">18.4</div>
<div class="t" style="left:636.0px;top:525.8px;font-size:8.3px;color:#1a50e8;font-weight:700;letter-spacing:0px;word-spacing:1px">Torque Demand</div>
<div class="t" style="left:636.0px;top:535.5px;font-size:8.3px;color:#1a50e8;font-weight:700;letter-spacing:0px;word-spacing:1px">Source</div>
<div class="t" style="left:636.0px;top:557.2px;font-size:17.5px;color:#1a55ff;font-weight:400;letter-spacing:0px;">Idle</div>
<div class="t" style="left:636.0px;top:578.8px;font-size:8.3px;color:#e060e8;font-weight:700;letter-spacing:0px;word-spacing:1px">Acceleration Pedal</div>
<div class="t" style="left:636.0px;top:588.5px;font-size:8.3px;color:#e060e8;font-weight:700;letter-spacing:0px;word-spacing:1px">(APP) Position (%)</div>
<div class="t" style="left:636.0px;top:610.0px;font-size:17.5px;color:#f070f0;font-weight:400;letter-spacing:0px;">0.00</div>
<div class="t" style="left:548.0px;top:827.3px;font-size:8.3px;color:#1a50e8;font-weight:700;letter-spacing:0px;word-spacing:1px">Lambda Setpoint</div>
<div class="t" style="left:548.0px;top:858.8px;font-size:17.5px;color:#1a55ff;font-weight:400;letter-spacing:0px;">0.837</div>
<div class="t" style="left:548.0px;top:880.4px;font-size:8.3px;color:#e0e000;font-weight:700;letter-spacing:0px;word-spacing:1px">Lambda Sensor 1</div>
<div class="t" style="left:548.0px;top:911.8px;font-size:17.5px;color:#f0f000;font-weight:400;letter-spacing:0px;">0.849</div>
<div class="t" style="left:548.0px;top:933.4px;font-size:8.3px;color:#00d8d8;font-weight:700;letter-spacing:0px;word-spacing:1px">Lambda Sensor 2</div>
<div class="t" style="left:548.0px;top:964.8px;font-size:17.5px;color:#00e8e8;font-weight:400;letter-spacing:0px;">0.836</div>
<div class="t" style="left:548.0px;top:986.4px;font-size:8.3px;color:#7a20e0;font-weight:700;letter-spacing:0px;word-spacing:1px">Short Term Fuel</div>
<div class="t" style="left:548.0px;top:996.1px;font-size:8.3px;color:#7a20e0;font-weight:700;letter-spacing:0px;word-spacing:1px">Trim Bank 1 (%)</div>
<div class="t" style="left:548.0px;top:1017.8px;font-size:17.5px;color:#8a10f0;font-weight:400;letter-spacing:0px;">-11.1</div>
<div class="t" style="left:548.0px;top:1039.4px;font-size:8.3px;color:#ee1010;font-weight:700;letter-spacing:0px;word-spacing:1px">Short Term Fuel</div>
<div class="t" style="left:548.0px;top:1049.1px;font-size:8.3px;color:#ee1010;font-weight:700;letter-spacing:0px;word-spacing:1px">Trim Bank 2 (%)</div>
<div class="t" style="left:548.0px;top:1070.8px;font-size:17.5px;color:#ff1010;font-weight:400;letter-spacing:0px;">-9.4</div>
<div class="t" style="left:636.0px;top:827.3px;font-size:8.3px;color:#6a38b0;font-weight:700;letter-spacing:0px;word-spacing:1px">Lambda Bank 1</div>
<div class="t" style="left:636.0px;top:837.0px;font-size:8.3px;color:#6a38b0;font-weight:700;letter-spacing:0px;word-spacing:1px">Closed Loop Active</div>
<div class="t" style="left:636.0px;top:858.8px;font-size:17.5px;color:#7a3ec8;font-weight:400;letter-spacing:0px;">Yes</div>
<div class="t" style="left:636.0px;top:880.4px;font-size:8.3px;color:#c03040;font-weight:700;letter-spacing:0px;word-spacing:1px">Lambda Bank 2</div>
<div class="t" style="left:636.0px;top:890.1px;font-size:8.3px;color:#c03040;font-weight:700;letter-spacing:0px;word-spacing:1px">Closed Loop Active</div>
<div class="t" style="left:636.0px;top:911.8px;font-size:17.5px;color:#d03848;font-weight:400;letter-spacing:0px;">Yes</div>
<div class="t" style="left:636.0px;top:933.4px;font-size:8.3px;color:#00c800;font-weight:700;letter-spacing:0px;word-spacing:1px">Ignition Angle</div>
<div class="t" style="left:636.0px;top:943.1px;font-size:8.3px;color:#00c800;font-weight:700;letter-spacing:0px;word-spacing:1px">Requested (°)</div>
<div class="t" style="left:636.0px;top:964.8px;font-size:17.5px;color:#00e000;font-weight:400;letter-spacing:0px;">6.4</div>
<div class="t" style="left:548.0px;top:1129.0px;font-size:8.3px;color:#00c800;font-weight:700;letter-spacing:0px;word-spacing:1px">Fuel Mass (g)</div>
<div class="t" style="left:548.0px;top:1160.1px;font-size:17.5px;color:#00e000;font-weight:400;letter-spacing:0px;">0.03361</div>
<div class="t" style="left:548.0px;top:1182.0px;font-size:8.3px;color:#e0e000;font-weight:700;letter-spacing:0px;word-spacing:1px">Fuel Mass To</div>
<div class="t" style="left:548.0px;top:1191.7px;font-size:8.3px;color:#e0e000;font-weight:700;letter-spacing:0px;word-spacing:1px">Cylinder Request (g</div>
<div class="t" style="left:548.0px;top:1213.2px;font-size:17.5px;color:#f0f000;font-weight:400;letter-spacing:0px;">0.03439</div>
<div class="t" style="left:548.0px;top:1287.7px;font-size:8.3px;color:#00d8d8;font-weight:700;letter-spacing:0px;word-spacing:1px">Priming Fuel Mass</div>
<div class="t" style="left:548.0px;top:1297.4px;font-size:8.3px;color:#00d8d8;font-weight:700;letter-spacing:0px;word-spacing:1px">(g)</div>
<div class="t" style="left:548.0px;top:1319.6px;font-size:17.5px;color:#00e8e8;font-weight:400;letter-spacing:0px;">0.13239</div>
<div class="a" style="left:544px;top:524px;width:175px;height:1px;background:#3a3a3a;"></div>
<div class="a" style="left:544px;top:825px;width:175px;height:1px;background:#3a3a3a;"></div>
<div class="a" style="left:544px;top:1127px;width:175px;height:1px;background:#3a3a3a;"></div>
<svg class="a" style="left:0;top:0" width="2463" height="1440" viewBox="0 0 2463 1440"><defs><linearGradient id="pg" x1="0" y1="0" x2="1" y2="0"><stop offset="0" stop-color="#0e3b62"/><stop offset="0.035" stop-color="#0b2a47"/><stop offset="0.1" stop-color="#000"/><stop offset="0.9" stop-color="#000"/><stop offset="0.962" stop-color="#0a2742"/><stop offset="1" stop-color="#0e3b62"/></linearGradient></defs><rect x="719" y="222.9" width="1601" height="1205.1" fill="url(#pg)"/><path d="M719,298.2H2320" stroke="rgba(255,255,255,0.28)" stroke-width="1"/><path d="M719,373.6H2320" stroke="rgba(255,255,255,0.28)" stroke-width="1"/><path d="M719,448.9H2320" stroke="rgba(255,255,255,0.28)" stroke-width="1"/><path d="M719,599.5H2320" stroke="rgba(255,255,255,0.28)" stroke-width="1"/><path d="M719,674.7H2320" stroke="rgba(255,255,255,0.28)" stroke-width="1"/><path d="M719,750.0H2320" stroke="rgba(255,255,255,0.28)" stroke-width="1"/><path d="M719,900.7H2320" stroke="rgba(255,255,255,0.28)" stroke-width="1"/><path d="M719,976.1H2320" stroke="rgba(255,255,255,0.28)" stroke-width="1"/><path d="M719,1051.5H2320" stroke="rgba(255,255,255,0.28)" stroke-width="1"/><path d="M719,1202.2H2320" stroke="rgba(255,255,255,0.28)" stroke-width="1"/><path d="M719,1277.5H2320" stroke="rgba(255,255,255,0.28)" stroke-width="1"/><path d="M719,1352.8H2320" stroke="rgba(255,255,255,0.28)" stroke-width="1"/><path d="M719.5,222.9V1428.0" stroke="#a8b0b8" stroke-width="1"/><path d="M2319.5,222.9V1428.0" stroke="#a8b0b8" stroke-width="1"/><polyline points="719,373 2320,373" fill="none" stroke="#40e040" stroke-width="1.4" stroke-linejoin="round" opacity="1"/><polyline points="719,431 2320,431" fill="none" stroke="#8a10e0" stroke-width="1.6" stroke-linejoin="round" opacity="1"/><polyline points="719,483 2320,483" fill="none" stroke="#1e5fd0" stroke-width="1.6" stroke-linejoin="round" opacity="1"/><polyline points="719.0,523.4 822.5,523.4 823.9,225.5 847.0,225.5 850.5,523.4 895.3,523.4 899.0,225.5 982.4,225.5 984.0,523.4 1078.0,523.4 1080.0,225.5 1482.2,225.5 1485.6,523.4 1910.2,523.4 1911.8,225.5 1935.5,225.5 1939.5,523.4 2127.4,523.4 2130.8,225.5 2320.0,225.5" fill="none" stroke="#10e8e8" stroke-width="1.4" stroke-linejoin="round" opacity="1"/><polyline points="719,523.4 2320,523.4" fill="none" stroke="#c8c020" stroke-width="1.4" stroke-linejoin="round" opacity="1"/><polyline points="719.0,464.5 723.0,465.4 727.0,464.9 731.0,465.6 735.0,465.7 739.0,463.9 743.1,463.8 747.1,466.4 751.1,464.5 755.1,464.5 759.1,466.9 763.1,465.2 767.1,466.4 771.1,465.2 775.1,465.8 779.1,464.2 783.1,465.8 787.2,466.5 791.2,465.4 795.2,466.1 799.2,465.9 803.2,463.9 807.2,466.2 811.2,465.6 815.2,464.7 819.2,463.8 823.2,466.5 827.2,465.3 831.3,466.1 835.3,466.6 839.3,466.0 843.3,466.7 847.3,465.0 851.3,466.3 855.3,465.2 859.3,466.8 863.3,466.6 867.3,464.1 871.3,464.2 875.4,464.5 879.4,466.9 883.4,465.2 887.4,465.8 891.4,464.7 895.4,465.4 899.4,465.0 903.4,464.9 907.4,465.7 911.4,465.7 915.4,466.7 919.5,466.0 923.5,466.8 927.5,466.5 931.5,467.0 935.5,465.9 939.5,464.3 943.5,466.6 947.5,466.9 951.5,466.7 955.5,465.6 959.5,466.1 963.6,464.5 967.6,466.5 971.6,465.6 975.6,464.7 979.6,464.0 983.6,466.6 987.6,467.0 991.6,464.1 995.6,466.4 999.6,465.1 1003.6,464.3 1007.7,464.8 1011.7,466.3 1015.7,466.6 1019.7,464.0 1023.7,465.8 1027.7,464.0 1031.7,466.1 1035.7,464.9 1039.7,466.7 1043.7,467.0 1047.7,465.5 1051.8,467.0 1055.8,464.8 1059.8,464.1 1063.8,465.8 1067.8,464.0 1071.8,464.5 1075.8,465.2 1079.8,465.8 1083.8,464.4 1087.8,464.0 1091.8,466.6 1095.9,464.9 1099.9,466.9 1103.9,466.7 1107.9,465.1 1111.9,465.4 1115.9,465.5 1119.9,465.9 1123.9,465.8 1127.9,465.7 1131.9,465.9 1135.9,466.9 1140.0,465.5 1144.0,465.3 1148.0,466.2 1152.0,464.7 1156.0,464.9 1160.0,467.0 1164.0,465.9 1168.0,466.4 1172.0,465.0 1176.0,466.6 1180.0,467.5 1184.0,466.1 1188.0,468.3 1192.0,468.7 1196.0,467.2 1200.0,469.4 1204.4,469.8 1208.8,471.4 1213.2,471.3 1217.6,473.3 1222.0,474.4 1226.1,472.2 1230.2,472.4 1234.3,474.5 1238.4,475.5 1242.5,473.3 1246.6,474.1 1250.7,474.6 1254.8,473.8 1258.9,474.1 1263.1,474.0 1267.2,474.3 1271.3,475.1 1275.4,474.3 1279.5,474.6 1283.6,476.0 1287.7,473.7 1291.8,475.5 1295.9,476.2 1300.0,474.9 1304.1,474.6 1308.2,476.4 1312.2,474.5 1316.3,474.3 1320.4,475.1 1324.5,475.9 1328.5,474.0 1332.6,474.6 1336.7,474.6 1340.8,476.2 1344.8,474.9 1348.9,476.2 1353.0,473.9 1357.1,474.4 1361.2,475.4 1365.2,476.1 1369.3,474.7 1373.4,473.9 1377.5,473.6 1381.5,474.8 1385.6,473.7 1389.7,475.6 1393.8,475.7 1397.8,473.6 1401.9,473.8 1406.0,475.5 1410.5,479.3 1415.1,484.2 1419.6,487.1 1423.6,486.4 1427.6,486.9 1431.6,488.5 1435.7,486.9 1439.7,487.1 1443.7,487.3 1447.7,487.3 1451.7,487.3 1455.7,488.9 1459.8,486.5 1463.8,486.0 1467.8,489.0 1471.8,488.8 1475.8,489.2 1479.8,487.4 1483.9,489.0 1487.9,489.0 1491.9,486.7 1495.9,488.4 1499.9,488.7 1503.9,488.1 1508.0,487.7 1512.0,486.9 1516.0,487.1 1520.0,486.7 1524.0,485.9 1528.1,487.3 1532.1,486.1 1536.2,487.5 1540.2,484.8 1544.3,487.3 1548.3,486.3 1552.4,486.8 1556.4,486.4 1560.5,486.2 1564.5,484.9 1568.6,482.8 1572.6,484.9 1576.7,482.8 1580.7,482.9 1584.8,483.8 1588.8,483.1 1592.9,482.4 1597.0,483.8 1601.1,482.5 1605.2,481.3 1609.4,480.8 1613.5,482.4 1617.6,480.9 1621.7,481.6 1625.8,479.9 1629.9,479.1 1634.0,479.9 1638.1,480.5 1642.2,478.2 1646.4,479.9 1650.5,480.0 1654.6,479.4 1658.7,479.1 1662.8,476.2 1666.9,477.9 1671.0,478.4 1675.1,475.5 1679.2,475.9 1683.4,475.6 1687.5,476.2 1691.6,475.5 1695.7,475.4 1699.8,476.1 1703.9,473.2 1708.0,473.0 1712.1,472.9 1716.2,472.5 1720.4,472.0 1724.5,474.5 1728.6,473.8 1732.7,470.9 1736.8,471.9 1740.9,470.9 1745.0,470.6 1749.1,470.3 1753.2,470.9 1757.4,470.3 1761.5,469.3 1765.6,468.3 1769.7,468.4 1773.8,467.4 1777.9,468.4 1782.0,468.6 1786.1,467.1 1790.2,465.8 1794.4,465.7 1798.5,466.0 1802.6,466.4 1806.7,466.6 1810.8,464.9 1814.8,466.3 1818.9,465.7 1822.9,465.1 1826.9,464.9 1831.0,465.3 1835.0,465.9 1839.0,465.0 1843.1,465.9 1847.1,465.1 1851.1,464.5 1855.2,465.4 1859.2,465.9 1863.2,463.9 1867.3,465.0 1871.3,465.0 1875.4,466.5 1879.4,466.6 1883.4,464.8 1887.5,466.5 1891.5,466.2 1895.5,464.5 1899.6,465.1 1903.6,464.0 1907.6,466.2 1911.7,465.7 1915.7,466.5 1919.7,466.1 1923.8,465.7 1927.8,466.0 1931.8,465.4 1935.9,463.9 1939.9,465.5 1943.9,463.6 1948.0,464.0 1952.0,466.1 1956.0,463.7 1960.1,463.9 1964.1,463.9 1968.1,466.4 1972.2,464.1 1976.2,463.6 1980.2,466.3 1984.3,463.9 1988.3,466.3 1992.3,465.7 1996.4,466.2 2000.4,466.6 2004.5,465.4 2008.5,466.1 2012.5,463.7 2016.6,466.0 2020.6,465.2 2024.6,465.8 2028.7,463.9 2032.7,465.9 2036.7,466.5 2040.8,463.7 2044.8,464.6 2048.8,465.3 2052.9,466.2 2056.9,464.3 2060.9,464.1 2065.0,464.3 2069.0,465.5 2073.0,465.9 2077.1,464.7 2081.1,464.7 2085.1,464.7 2089.2,464.6 2093.2,464.8 2097.2,463.7 2101.3,465.1 2105.3,466.6 2109.3,464.8 2113.4,465.8 2117.4,464.0 2121.4,465.7 2125.5,465.9 2129.5,465.6 2133.6,465.1 2137.6,465.0 2141.6,465.5 2145.7,466.3 2149.7,463.9 2153.7,463.7 2157.8,465.8 2161.8,466.4 2165.8,465.1 2169.9,464.8 2173.9,465.7 2177.9,464.0 2182.0,464.3 2186.0,464.0 2190.2,466.2 2194.5,466.3 2198.7,467.0 2203.0,469.4 2207.2,471.2 2211.4,470.0 2215.7,472.3 2219.9,472.3 2224.2,474.7 2228.4,474.8 2232.6,473.7 2236.7,473.6 2240.9,472.9 2245.1,474.3 2249.2,474.0 2253.4,473.3 2257.5,473.9 2261.7,473.7 2265.9,475.2 2270.0,473.1 2274.2,475.8 2278.4,474.2 2282.5,474.5 2286.7,474.1 2290.9,475.2 2295.0,475.2 2299.2,474.3 2303.3,474.0 2307.5,474.8 2311.7,475.2 2315.8,473.7 2320.0,474.0" fill="none" stroke="#e80000" stroke-width="1.4" stroke-linejoin="round" opacity="1"/><polyline points="719,825 2320,825" fill="none" stroke="#7a68d0" stroke-width="1.8" stroke-linejoin="round" opacity="1"/><polyline points="720.4,804.1 721.8,803.2 723.3,802.3 724.6,800.9 726.3,795.9 727.6,789.3 729.8,784.2 732.4,782.2 735.6,780.9 739.2,780.1 745.9,779.1 753.5,778.8 760.1,780.1 764.2,783.0 767.5,787.0 770.6,791.5 774.0,798.3 777.0,805.8 780.0,809.3 782.4,806.9 784.8,801.9 787.3,797.8 789.3,796.4 791.4,795.4 793.6,794.7 795.6,794.2 797.6,793.8 799.8,793.6 803.9,793.0 808.5,792.5 812.3,793.6 815.1,799.2 816.6,807.3 818.6,814.5 820.6,818.3 822.9,821.6 825.9,823.9 830.8,825.3 836.6,825.5 841.6,823.9 845.8,818.1 848.9,809.6 852.0,802.0 854.2,797.8 856.4,794.1 859.3,791.5 863.5,790.0 868.4,789.5 872.9,790.5 877.4,794.5 881.5,800.6 885.5,806.2 888.8,810.2 892.0,813.8 895.9,816.6 902.8,817.8 910.8,817.7 916.8,818.7 918.4,820.4 919.4,822.4 921.0,823.9 925.9,824.9 932.2,824.8 937.7,823.9 940.7,822.6 943.3,820.9 946.0,819.7 948.9,819.2 951.9,819.2 954.4,819.7 955.8,820.9 957.0,822.6 958.6,823.9 963.0,824.9 968.6,825.0 973.2,823.9 975.7,821.5 977.6,818.2 979.5,814.5 982.1,808.6 984.7,802.2 987.8,797.8 990.3,796.7 993.1,796.6 996.2,796.8 1002.2,797.7 1009.0,799.4 1015.0,800.9 1018.0,801.8 1020.5,802.6 1023.3,803.0 1027.3,802.0 1031.6,800.3 1035.8,799.9 1040.1,802.8 1044.1,807.3 1048.4,810.3 1052.5,810.1 1056.7,808.8 1060.9,808.3 1065.3,809.6 1069.7,811.8 1073.4,814.5 1075.5,817.6 1077.1,821.2 1079.7,823.9 1089.2,825.2 1101.1,824.6 1106.9,823.9 1105.1,823.9 1101.8,823.9 1100.0,823.9 1104.9,823.9 1115.8,823.9 1126.7,823.9 1135.6,823.9 1144.5,823.9 1153.4,823.9 1162.3,823.9 1171.2,823.9 1180.1,823.9 1189.0,823.9 1197.9,823.9 1206.8,823.9 1215.7,823.9 1224.6,823.9 1233.5,823.9 1242.4,823.9 1251.3,823.9 1260.2,823.9 1269.1,823.9 1278.0,823.9 1287.0,823.9 1295.9,823.9 1304.8,823.9 1313.7,823.9 1322.6,823.9 1331.5,823.9 1340.4,823.9 1349.3,823.9 1358.2,823.9 1367.1,823.9 1376.0,823.9 1384.9,823.9 1393.8,823.9 1402.7,823.9 1411.6,823.9 1420.5,823.9 1429.4,823.9 1438.3,823.9 1447.2,823.9 1456.7,824.5 1466.3,825.1 1473.9,823.9 1477.3,821.4 1479.8,818.1 1482.2,814.5 1485.1,809.6 1487.8,804.3 1490.6,799.9 1492.7,797.7 1494.9,796.0 1496.9,794.7 1498.0,794.3 1499.0,794.1 1500.0,793.6 1502.6,790.3 1505.4,785.5 1508.4,781.1 1511.1,778.0 1513.8,775.1 1516.7,772.7 1519.3,771.0 1522.1,769.7 1525.1,768.6 1529.3,767.9 1533.9,767.4 1537.6,766.5 1539.1,765.2 1540.2,763.7 1541.8,762.3 1547.4,760.4 1554.9,759.0 1562.7,758.1 1571.5,757.7 1580.7,757.9 1589.8,758.0 1598.9,758.0 1607.9,758.0 1617.0,757.9 1626.0,757.9 1635.1,757.9 1644.1,757.9 1653.2,757.8 1662.2,757.8 1671.3,757.8 1680.4,757.5 1689.6,757.3 1698.4,757.7 1705.7,758.9 1712.7,760.7 1719.3,762.3 1724.2,763.5 1728.8,764.6 1733.9,765.4 1742.3,765.8 1751.7,765.6 1761.1,765.4 1770.6,765.1 1780.0,764.9 1788.3,765.4 1793.0,766.2 1797.2,767.4 1800.8,769.6 1804.0,774.1 1806.5,779.8 1809.1,785.3 1811.8,789.8 1814.7,794.1 1817.5,797.8 1819.5,800.2 1821.5,802.3 1823.8,803.7 1826.4,804.2 1829.2,804.2 1832.1,803.7 1835.9,802.3 1840.0,800.4 1844.6,798.9 1852.6,798.3 1861.7,798.6 1870.8,798.9 1880.4,798.7 1890.1,798.6 1896.9,798.9 1898.1,799.1 1899.0,799.4 1900.0,799.9 1902.1,800.8 1904.3,802.1 1906.3,804.0 1907.6,810.2 1908.1,818.1 1910.4,823.9 1916.5,826.1 1924.5,826.1 1931.3,823.9 1935.6,817.3 1938.5,808.1 1941.8,800.9 1944.5,798.6 1947.4,797.1 1950.1,795.7 1952.3,794.4 1954.4,793.1 1956.4,791.5 1958.3,788.6 1960.0,785.3 1962.7,782.7 1971.2,780.8 1982.3,780.9 1991.9,782.7 1996.4,785.7 1999.9,789.6 2004.4,792.6 2013.1,793.9 2023.4,793.5 2033.7,793.1 2043.7,792.9 2053.8,792.7 2062.9,793.6 2068.7,795.6 2073.9,798.2 2079.6,800.9 2089.3,804.6 2099.9,808.3 2108.9,811.4 2112.7,812.5 2115.9,813.3 2119.3,814.5 2123.8,817.5 2128.5,821.2 2133.9,823.9 2142.0,824.8 2151.2,824.4 2160.3,823.9 2169.1,823.9 2177.9,823.9 2186.7,823.9 2195.5,823.9 2204.3,823.9 2213.1,823.9 2221.9,823.9 2230.8,823.9 2239.6,823.9 2248.4,823.9 2257.2,823.9 2266.0,823.9 2274.8,823.9 2283.6,823.9 2292.4,823.9 2301.2,823.9 2310.0,823.9 2318.8,823.9" fill="none" stroke="#00e000" stroke-width="1.5" stroke-linejoin="round" opacity="1"/><polyline points="720.4,700.7 723.9,699.2 727.4,697.7 730.9,695.5 736.3,689.3 741.9,681.3 747.6,674.6 752.4,670.8 757.4,667.8 762.2,666.2 765.8,666.0 769.2,666.7 772.7,668.3 778.3,673.6 784.0,680.9 789.4,686.1 792.1,687.3 794.7,687.8 797.7,688.1 803.7,687.6 810.5,686.6 816.5,687.1 820.5,689.8 823.8,693.6 827.0,697.5 829.8,701.0 832.4,704.6 835.3,708.0 839.3,711.9 843.7,715.5 847.9,717.4 850.7,717.2 853.5,716.1 856.2,714.3 860.3,709.5 864.4,703.2 868.7,697.5 872.8,693.4 877.1,689.8 881.3,688.1 884.8,688.8 888.2,690.8 891.7,693.4 897.2,698.2 902.9,704.2 908.4,709.0 911.8,711.1 915.2,712.7 918.9,714.3 925.3,717.0 932.5,719.8 939.8,721.6 946.7,721.8 953.7,721.1 960.7,720.5 968.0,721.0 975.3,721.6 981.5,720.5 985.5,717.2 988.8,712.5 992.0,708.0 995.3,703.8 998.6,699.8 1002.4,696.5 1006.8,694.4 1011.6,693.1 1017.0,692.3 1025.6,692.0 1035.1,692.7 1044.2,694.4 1051.6,697.2 1058.6,700.8 1065.1,703.8 1069.5,704.9 1073.5,705.6 1077.6,706.9 1082.4,709.7 1087.3,713.3 1092.2,716.3 1097.3,718.3 1102.5,719.7 1106.9,720.9 1108.8,721.4 1110.5,721.9 1112.5,722.2 1117.2,722.6 1123.0,722.7 1129.2,722.6 1137.8,722.3 1147.1,721.7 1156.4,721.0 1165.6,720.7 1174.8,720.4 1183.6,719.5 1190.6,718.1 1197.3,716.3 1204.4,714.3 1214.4,711.2 1225.1,707.7 1235.8,704.9 1246.0,703.3 1256.3,702.4 1267.1,701.7 1280.9,700.9 1295.4,700.4 1308.9,700.1 1318.6,700.0 1327.7,700.0 1336.7,699.9 1346.0,699.9 1355.3,699.8 1364.6,699.8 1374.0,699.8 1383.4,699.9 1392.4,699.6 1400.1,698.9 1407.4,697.8 1413.3,696.5 1415.6,695.7 1417.4,694.8 1419.6,693.4 1426.8,687.4 1435.7,679.3 1444.6,672.5 1451.5,669.0 1458.5,666.4 1465.5,664.1 1472.8,662.2 1480.1,660.6 1486.4,657.9 1490.6,653.8 1494.1,648.9 1496.9,645.3 1497.9,644.5 1498.9,644.0 1500.0,643.2 1505.9,637.0 1513.8,628.1 1520.9,620.3 1524.4,616.7 1527.5,613.6 1531.3,610.9 1537.6,607.9 1544.9,605.5 1552.2,603.6 1559.0,602.4 1565.8,601.8 1573.1,601.5 1582.9,601.6 1593.4,602.3 1604.4,603.1 1618.2,604.2 1632.7,605.5 1646.2,606.7 1655.7,607.6 1664.5,608.4 1673.3,609.3 1682.5,610.0 1691.6,610.7 1700.5,611.9 1708.5,613.6 1716.2,615.8 1723.5,618.2 1729.2,620.6 1734.6,623.2 1740.2,625.5 1746.8,627.5 1753.7,629.2 1761.1,630.7 1771.6,632.1 1782.8,633.3 1792.4,634.9 1797.2,636.3 1801.3,638.0 1805.0,640.1 1808.0,642.4 1810.6,645.2 1813.3,648.5 1817.5,655.2 1821.7,663.2 1825.8,670.4 1828.5,674.7 1831.1,678.6 1834.2,681.9 1837.9,684.7 1842.0,687.1 1846.7,688.8 1854.3,689.8 1863.1,689.8 1871.8,689.8 1881.1,690.3 1890.3,690.7 1896.9,690.9 1898.1,690.9 1899.0,690.8 1900.0,690.8 1902.5,690.8 1905.4,690.9 1908.4,691.7 1912.4,694.5 1916.5,698.6 1920.9,702.7 1926.3,707.9 1932.0,713.1 1937.6,715.3 1943.2,712.5 1948.8,706.3 1954.3,699.6 1960.4,691.2 1966.4,682.0 1973.1,674.6 1979.9,670.4 1987.1,667.5 1994.0,666.2 1999.0,666.8 2003.8,668.5 2008.6,670.4 2013.8,672.8 2019.1,675.5 2025.3,677.7 2037.0,678.7 2050.4,678.6 2062.9,679.8 2071.7,682.9 2079.8,687.0 2088.0,691.3 2097.6,696.1 2107.4,701.1 2117.2,705.9 2126.9,710.5 2136.7,714.9 2146.4,718.4 2155.0,720.4 2163.4,721.7 2171.5,722.6 2177.9,723.2 2184.0,723.5 2190.3,723.0 2197.9,721.1 2205.7,718.3 2213.3,715.3 2220.3,712.4 2227.2,709.3 2234.2,706.9 2241.0,705.4 2247.8,704.5 2255.1,703.8 2265.2,703.4 2276.1,703.5 2286.9,703.6 2297.6,703.5 2308.2,703.5 2318.8,703.4" fill="none" stroke="#e8d800" stroke-width="1.5" stroke-linejoin="round" opacity="1"/><polyline points="720.4,681.2 721.8,684.2 723.2,686.8 724.6,688.5 726.2,686.6 727.9,684.2 729.8,678.3 732.7,676.5 735.9,674.8 739.2,670.9 741.9,669.4 744.6,664.8 747.6,664.0 751.9,661.1 756.6,660.1 761.2,659.1 764.8,657.1 768.3,658.2 771.6,659.2 774.1,662.3 776.4,663.4 778.9,663.0 783.2,668.0 788.1,669.0 793.6,672.9 797.9,671.4 802.1,671.0 805.2,673.4 808.4,670.9 811.5,670.6 815.0,673.3 818.6,673.3 820.8,673.6 822.1,678.6 823.8,679.9 827.2,683.0 831.3,683.9 835.3,688.5 838.9,690.2 842.4,693.5 845.8,694.7 848.6,692.8 851.4,692.2 854.1,690.2 857.6,687.2 861.0,683.0 864.6,680.2 868.8,678.3 873.1,673.8 877.1,674.1 879.3,671.9 881.3,671.0 883.4,672.4 886.1,672.1 888.9,673.2 891.7,675.5 894.5,678.6 897.2,679.1 900.1,684.4 903.3,683.7 906.7,688.1 910.5,690.3 913.5,688.6 916.5,691.9 919.9,691.2 923.2,692.6 926.2,691.3 929.3,691.9 932.8,693.2 935.9,696.4 939.8,694.5 943.0,696.6 946.2,697.4 949.5,697.7 952.7,696.0 955.9,696.1 959.1,696.7 962.3,697.6 965.5,695.5 968.7,697.6 971.9,697.4 975.1,697.3 978.3,694.3 981.5,696.9 985.8,692.5 989.1,691.2 992.0,689.6 994.2,687.7 996.1,682.9 998.3,682.2 1000.7,679.2 1003.3,677.1 1006.6,676.1 1010.9,675.0 1015.2,674.1 1018.8,674.2 1022.3,675.8 1025.9,676.7 1029.2,674.2 1032.5,674.0 1035.8,677.2 1039.1,676.4 1042.4,676.7 1045.4,677.1 1048.4,679.2 1051.5,680.9 1054.6,680.7 1058.2,681.3 1061.7,680.9 1065.3,684.3 1069.0,682.1 1072.2,684.3 1075.5,686.1 1079.2,684.8 1082.5,687.7 1086.0,689.5 1091.6,690.4 1094.6,692.0 1097.6,690.8 1102.7,693.2 1104.7,692.4 1106.3,694.5 1108.4,692.7 1114.2,693.8 1117.8,695.9 1121.4,695.9 1125.3,696.7 1129.2,695.4 1132.7,695.6 1136.3,696.6 1139.8,695.9 1143.6,695.4 1147.4,695.8 1151.2,695.1 1155.0,695.9 1158.9,698.0 1162.7,698.0 1165.8,696.9 1168.8,696.5 1171.9,696.1 1175.0,695.3 1178.1,695.9 1181.2,697.6 1184.2,697.9 1187.3,696.3 1191.7,698.0 1196.1,698.4 1197.7,698.8 1198.8,699.5 1200.3,700.4 1203.9,699.4 1207.6,700.8 1210.9,699.3 1214.2,699.9 1217.5,700.8 1220.8,700.4 1224.2,699.0 1227.5,701.0 1230.5,700.1 1233.5,699.9 1236.5,698.0 1239.5,699.8 1242.6,698.8 1245.6,700.1 1248.6,699.5 1251.6,700.6 1254.6,700.1 1257.6,700.6 1260.6,699.1 1263.6,700.1 1266.6,700.4 1269.7,700.7 1272.7,699.1 1275.7,700.7 1278.8,700.8 1281.8,700.2 1284.8,701.1 1287.8,701.1 1290.8,699.7 1293.8,699.7 1296.8,698.5 1299.8,700.7 1302.8,701.0 1305.9,699.5 1308.9,700.2 1312.0,700.3 1315.1,700.3 1318.2,698.5 1321.3,700.5 1324.3,699.9 1327.4,700.1 1330.5,699.3 1333.6,700.0 1336.7,700.5 1339.8,700.0 1342.9,700.3 1346.0,698.1 1349.1,698.5 1352.2,699.4 1355.3,700.1 1358.4,698.7 1361.5,700.2 1364.6,700.0 1367.8,698.0 1370.9,699.3 1374.1,698.4 1377.3,697.8 1380.5,697.9 1383.7,698.4 1388.1,698.3 1392.4,698.6 1395.4,698.8 1398.4,700.9 1403.9,702.6 1409.1,705.3 1413.5,707.1 1417.6,707.8 1421.7,710.3 1425.8,705.3 1429.8,702.9 1434.2,698.9 1437.5,697.6 1440.7,695.0 1444.2,695.6 1447.8,692.5 1451.4,690.1 1455.1,690.6 1458.7,687.9 1462.2,688.2 1465.8,686.7 1469.4,686.7 1472.7,687.2 1476.0,686.0 1480.7,684.2 1485.1,685.1 1488.5,683.4 1490.2,680.0 1491.3,676.2 1492.7,674.9 1494.9,673.2 1497.4,673.3 1500.0,671.9 1503.4,668.2 1506.9,664.5 1510.4,663.3 1513.9,657.0 1517.4,653.7 1520.9,651.8 1524.3,648.9 1527.7,644.4 1531.3,643.6 1534.7,643.4 1538.2,641.1 1541.8,640.5 1545.9,638.3 1550.0,636.7 1554.3,637.4 1559.0,634.5 1564.0,635.7 1568.9,635.1 1573.7,634.0 1578.5,633.0 1583.6,635.3 1586.8,633.5 1590.1,632.9 1593.5,632.2 1597.0,633.8 1600.7,632.0 1604.4,631.0 1607.9,631.6 1611.3,630.4 1614.8,631.9 1618.5,631.4 1622.2,630.9 1625.9,632.5 1629.6,632.7 1633.4,630.1 1637.1,631.8 1640.7,631.0 1644.4,633.1 1648.0,632.6 1651.7,630.9 1655.3,631.0 1659.0,630.6 1662.6,633.3 1666.3,631.0 1669.9,632.0 1673.6,631.6 1677.3,632.0 1681.0,631.8 1684.7,632.2 1688.4,630.1 1692.1,632.1 1695.6,630.8 1699.1,631.7 1702.6,631.2 1706.7,631.6 1710.8,632.9 1714.7,633.5 1718.5,634.0 1722.0,635.9 1725.6,636.2 1730.8,635.4 1735.6,636.9 1740.2,638.5 1743.6,640.7 1746.9,641.3 1750.7,640.8 1754.8,639.3 1758.8,641.9 1762.0,640.7 1765.2,641.2 1768.4,641.6 1771.5,641.4 1774.7,641.0 1777.8,642.4 1782.2,641.0 1786.7,641.3 1791.1,643.1 1795.4,641.4 1799.2,642.4 1802.9,644.8 1806.8,643.6 1810.0,647.6 1813.3,649.1 1817.6,651.7 1821.8,655.4 1825.8,660.8 1828.7,663.8 1831.4,663.9 1834.2,667.2 1837.3,670.1 1840.6,672.4 1844.6,673.7 1848.4,673.5 1852.3,675.4 1855.4,675.9 1858.4,673.4 1861.5,673.7 1864.6,675.5 1867.7,675.3 1870.8,674.7 1874.0,672.7 1877.2,675.0 1880.4,675.8 1883.6,675.9 1886.9,675.0 1890.1,673.0 1893.5,675.4 1896.9,673.3 1898.1,674.4 1899.0,675.0 1900.0,674.2 1902.5,672.6 1905.5,673.8 1908.4,676.9 1911.2,676.3 1914.0,680.0 1916.7,681.6 1919.4,683.3 1922.1,687.4 1925.1,687.7 1928.7,689.8 1932.6,692.3 1936.5,692.0 1940.5,691.7 1944.5,692.2 1948.0,691.0 1950.4,688.6 1952.2,682.7 1954.3,680.6 1957.0,678.3 1960.0,677.6 1962.7,675.6 1964.7,675.0 1966.6,671.0 1968.9,667.9 1973.2,667.2 1978.3,662.9 1983.5,662.4 1988.3,660.7 1993.2,661.2 1998.2,660.1 2001.2,661.0 2004.3,660.6 2007.4,662.9 2010.6,663.2 2013.8,665.9 2017.0,666.3 2020.0,665.7 2023.0,666.8 2026.0,667.7 2029.1,669.4 2032.4,667.9 2035.8,670.0 2039.6,669.8 2043.5,668.0 2047.3,669.8 2050.5,667.9 2053.7,667.8 2056.9,669.2 2060.1,668.0 2063.8,670.2 2067.6,669.1 2071.3,668.7 2074.3,670.9 2077.3,669.2 2082.6,673.2 2088.0,673.2 2091.4,674.8 2094.8,678.7 2098.3,679.3 2101.8,679.3 2105.4,680.3 2108.9,684.4 2112.4,684.6 2115.8,686.2 2119.2,685.0 2122.7,687.6 2126.2,687.7 2129.7,688.4 2133.1,689.6 2136.6,691.5 2140.1,691.5 2143.6,692.5 2147.1,692.5 2150.6,695.5 2154.1,695.3 2157.5,696.3 2161.0,695.3 2164.5,696.9 2168.0,696.2 2171.5,696.8 2175.0,697.2 2178.5,698.3 2181.9,697.8 2185.4,697.4 2188.9,697.7 2192.4,698.6 2195.8,698.4 2199.1,701.4 2202.4,700.3 2205.8,701.3 2209.6,699.0 2213.3,700.6 2216.6,701.9 2219.8,701.0 2223.1,700.4 2226.3,700.5 2230.0,699.2 2233.7,699.2 2237.3,699.1 2241.0,699.7 2244.5,699.6 2248.1,701.1 2251.6,698.6 2255.1,698.8 2258.9,698.8 2262.8,698.3 2266.6,698.5 2270.3,698.2 2273.9,698.9 2277.6,697.3 2281.2,700.1 2284.9,698.2 2288.5,700.0 2291.9,699.2 2295.3,699.2 2298.7,698.6 2302.1,700.2 2305.4,697.6 2308.8,699.4 2312.1,698.3 2315.5,699.7 2318.8,699.2" fill="none" stroke="#e80000" stroke-width="1.4" stroke-linejoin="round" opacity="1"/><polyline points="719.0,1126.6 874.6,1126.6 877.7,828.4 895.3,828.4 899.0,1126.6 982.6,1126.6 984.0,828.4 1078.0,828.4 1079.7,1126.6 1231.6,1126.6 1234.7,828.4 1237.9,828.4 1240.0,1126.6 1243.0,1126.6 1246.2,828.4 1342.3,828.4 1345.4,1126.6 1349.6,1126.6 1350.7,828.4 1910.0,828.4 1912.0,1126.6 1936.5,1126.6 1939.0,828.4 2126.6,828.4 2129.7,1126.6 2223.7,1126.6 2226.2,828.4 2314.6,828.4 2316.7,1126.6 2320.0,1126.6" fill="none" stroke="#d8506a" stroke-width="1.5" stroke-linejoin="round" opacity="1"/><polyline points="720.4,982.9 730.9,992.3 745.5,996.5 781.0,981.9 787.3,991.3 795.6,991.3 814.4,984.0 827.0,976.2 843.7,976.2 847.9,990.2 868.7,989.2 893.8,976.7 939.8,977.7 977.4,977.7 983.6,990.2 994.1,990.2 996.2,976.7 1106.9,976.2 1313.1,976.2 1350.7,977.7 1434.2,977.7 1476.0,982.9 1484.3,995.5 1496.9,999.6 1500.0,998.6 1510.4,1000.7 1520.9,1001.3 1533.4,998.6 1539.7,991.3 1541.8,995.5 1554.3,995.5 1558.5,991.3 1792.4,991.3 1823.8,987.1 1838.4,979.8 1855.1,978.7 1896.9,978.7 1900.0,978.7 1912.5,976.6 1934.5,976.6 1939.7,990.2 1956.4,991.3 1960.6,982.9 1966.8,988.1 1983.5,987.1 2025.3,981.9 2088.0,978.7 2123.5,976.2 2318.8,976.2" fill="none" stroke="#1e60e0" stroke-width="1.4" stroke-linejoin="round" opacity="1"/><polyline points="1035.8,976.2 1036.9,955.8 1044.2,950.5 1065.1,950.5 1075.5,955.8 1077.6,976.2" fill="none" stroke="#9010e8" stroke-width="1.4" stroke-linejoin="round" opacity="1"/><polyline points="1315.1,976.2 1316.2,981.9 1329.8,981.9 1331.9,976.2 1432.1,976.2 1455.1,987.1 1486.4,988.1 1496.9,979.8" fill="none" stroke="#9010e8" stroke-width="1.4" stroke-linejoin="round" opacity="1"/><polyline points="1500.0,979.8 1506.3,979.2 1516.7,990.2 1525.1,993.4 1535.5,993.4 1552.2,959.9 1562.7,958.9 1583.6,958.9 1604.4,955.8 1646.2,954.7 1708.9,951.2 1750.7,953.7 1802.9,956.8 1825.8,956.8 1850.9,964.1 1876.0,967.3 1896.9,969.3" fill="none" stroke="#9010e8" stroke-width="1.4" stroke-linejoin="round" opacity="1"/><polyline points="1900.0,969.3 1908.4,969.3 1910.4,974.6 1987.7,975.6 1998.2,956.8 2004.4,954.7 2050.4,954.7 2065.0,957.8 2108.9,960.4 2123.5,962.0 2125.6,975.6" fill="none" stroke="#9010e8" stroke-width="1.4" stroke-linejoin="round" opacity="1"/><polyline points="1033.8,976.2 1034.8,947.4 1044.2,940.7 1069.3,940.7 1075.5,945.3 1077.6,976.2" fill="none" stroke="#e80000" stroke-width="1.5" stroke-linejoin="round" opacity="1"/><polyline points="1313.1,976.2 1315.1,984.0 1329.8,984.0 1331.9,976.2 1432.1,976.2 1434.2,984.0 1455.1,988.1 1482.2,988.1 1496.9,975.6" fill="none" stroke="#e80000" stroke-width="1.5" stroke-linejoin="round" opacity="1"/><polyline points="1500.0,974.6 1508.4,974.6 1516.7,987.1 1525.1,992.3 1535.5,992.3 1546.0,966.2 1556.4,948.5 1562.7,946.4 1583.6,946.4 1604.4,944.9 1654.6,943.2 1688.0,944.9 1729.8,946.4 1771.5,948.5 1802.9,949.1 1827.9,945.3 1840.5,945.3 1853.0,952.6 1865.5,954.7 1896.9,955.8" fill="none" stroke="#e80000" stroke-width="1.5" stroke-linejoin="round" opacity="1"/><polyline points="1900.0,955.8 1908.4,956.8 1910.4,974.6 1987.7,975.6 1991.9,955.8 2002.3,944.3 2054.6,944.3 2077.5,947.8 2108.9,949.1 2123.5,952.6 2125.6,975.6" fill="none" stroke="#e80000" stroke-width="1.5" stroke-linejoin="round" opacity="1"/><polyline points="719,976.2 2320,976.2" fill="none" stroke="#d8506a" stroke-width="1.4" stroke-linejoin="round" opacity="1"/><polyline points="720.4,968.9 722.4,966.5 724.4,965.4 726.7,963.2 730.1,964.9 733.9,966.8 737.2,969.5 740.4,980.7 742.4,993.8 745.5,999.8 750.9,995.6 757.5,983.6 764.3,973.8 769.8,969.5 775.4,966.5 781.0,962.3 785.3,961.2 789.6,961.6 793.6,962.9 798.0,966.2 802.1,971.6 806.1,976.6 808.8,975.1 811.4,976.1 814.4,974.2 819.6,971.9 825.5,969.1 831.1,967.9 835.5,968.8 839.7,968.3 843.7,970.6 848.0,974.0 852.0,977.8 856.2,983.0 861.7,989.4 867.4,997.3 872.9,1001.1 877.9,997.9 882.6,988.7 887.5,980.4 892.2,975.5 897.2,970.2 902.2,966.9 906.4,967.5 910.6,968.2 914.7,968.8 919.0,972.0 923.1,975.5 927.2,979.5 931.2,982.2 935.3,984.2 939.8,988.1 946.3,988.9 953.5,991.6 960.7,992.8 967.7,988.7 974.7,984.9 981.5,982.0 988.7,987.8 995.7,995.6 1002.4,998.7 1009.5,992.9 1016.3,979.7 1023.3,970.8 1028.9,966.6 1034.6,963.9 1040.0,963.0 1044.9,967.0 1049.5,972.7 1054.6,976.6 1061.4,980.2 1068.8,981.3 1075.5,984.4 1079.4,985.4 1082.9,987.0 1086.0,986.7 1088.1,984.9 1090.0,983.7 1092.2,983.2 1097.7,981.5 1103.9,982.6 1106.9,982.2 1105.1,982.0 1101.8,981.9 1100.0,983.4 1103.7,983.2 1108.0,984.2 1112.2,985.3 1116.6,987.0 1120.9,986.3 1125.5,987.9 1130.0,989.1 1134.8,990.7 1139.5,991.4 1143.8,991.8 1148.0,990.9 1153.1,989.9 1157.8,987.9 1162.7,987.9 1169.1,988.8 1175.9,989.1 1183.6,990.7 1188.0,991.0 1192.3,991.3 1196.7,992.1 1201.6,992.3 1206.4,991.6 1211.3,991.1 1216.0,991.7 1220.6,991.3 1225.3,991.4 1230.7,991.3 1236.1,989.9 1241.2,988.3 1246.4,987.3 1251.6,986.4 1256.7,984.1 1262.1,985.1 1267.4,984.3 1272.7,983.9 1278.0,983.3 1283.0,982.1 1288.0,981.7 1295.1,980.7 1301.8,981.6 1308.9,979.9 1314.1,979.2 1319.2,978.8 1324.7,977.8 1330.1,977.3 1335.2,975.7 1340.2,974.6 1347.0,972.6 1353.3,970.1 1359.0,970.1 1363.1,972.2 1366.7,978.2 1371.5,981.0 1375.7,980.4 1379.8,981.0 1384.0,981.5 1389.1,981.0 1394.3,980.0 1399.4,981.0 1404.0,980.8 1408.7,979.2 1413.3,978.7 1420.8,976.8 1427.6,975.7 1434.2,976.4 1441.3,979.1 1448.3,984.6 1455.1,986.4 1460.8,987.4 1466.5,989.8 1471.8,988.2 1477.0,984.4 1481.8,980.8 1486.4,975.8 1490.2,974.2 1493.9,972.8 1496.9,971.1 1498.0,970.5 1499.0,969.5 1500.0,970.1 1503.1,976.2 1506.5,988.1 1510.4,995.6 1513.1,998.0 1515.9,998.0 1518.8,998.0 1521.7,998.9 1524.5,998.2 1527.2,996.2 1530.1,992.1 1532.6,986.8 1535.5,981.3 1540.1,973.2 1545.3,966.6 1550.1,962.8 1553.0,963.4 1555.8,966.3 1558.5,970.0 1561.1,973.5 1563.6,978.4 1566.8,981.7 1571.7,981.6 1577.6,982.0 1583.6,981.8 1590.1,982.2 1596.9,981.7 1604.4,982.3 1608.7,983.0 1613.0,983.6 1617.3,984.3 1622.1,985.9 1626.9,987.3 1631.7,988.0 1636.5,987.9 1641.4,988.9 1646.2,989.8 1650.8,988.6 1655.5,989.9 1660.1,990.6 1664.8,990.4 1669.4,990.4 1674.1,989.9 1678.7,989.4 1683.4,990.7 1688.0,989.9 1692.8,991.1 1697.7,991.7 1702.5,990.9 1707.3,991.3 1712.1,992.8 1716.9,992.7 1721.2,992.0 1725.5,992.3 1729.8,992.7 1737.0,995.0 1743.5,995.6 1750.7,994.8 1755.1,996.1 1759.5,996.3 1763.9,995.6 1768.8,994.7 1773.7,994.9 1778.6,993.8 1783.2,993.2 1787.8,994.7 1792.4,993.7 1797.2,992.8 1802.0,992.9 1806.5,991.1 1810.9,991.1 1815.2,991.0 1819.6,989.6 1824.0,990.9 1828.4,992.1 1832.8,993.7 1837.1,996.2 1844.6,998.1 1848.3,999.2 1851.5,999.1 1855.1,1000.4 1861.6,997.0 1868.8,993.5 1876.0,990.4 1883.6,988.5 1891.3,985.4 1896.9,984.8 1898.0,983.6 1898.9,983.3 1900.0,982.9 1905.7,980.8 1913.5,980.8 1920.9,980.2 1926.0,980.6 1930.7,983.7 1935.5,984.3 1941.3,987.8 1947.0,991.9 1952.2,995.5 1955.9,1000.3 1959.1,1006.3 1962.7,1009.1 1969.1,1005.0 1976.4,993.6 1983.5,985.1 1989.3,977.7 1994.9,971.3 2000.3,968.8 2003.9,968.6 2007.3,970.5 2010.7,973.0 2014.0,975.9 2017.2,978.1 2021.1,981.0 2028.4,983.0 2032.8,983.6 2037.2,984.6 2041.7,984.5 2046.2,985.1 2051.3,985.2 2056.4,986.3 2061.7,985.7 2067.0,986.0 2072.3,986.0 2077.6,984.5 2082.8,985.0 2088.1,985.6 2093.4,985.3 2098.7,983.8 2103.8,984.0 2108.9,984.9 2113.2,985.1 2117.4,986.5 2121.5,987.5 2125.6,990.0 2129.8,991.1 2133.9,992.1 2138.4,990.1 2142.8,990.7 2147.3,989.6 2151.8,987.5 2156.4,988.4 2161.1,988.0 2166.3,987.3 2171.5,989.5 2176.8,989.7 2182.0,991.3 2187.2,993.3 2192.4,994.1 2197.2,993.2 2201.9,994.3 2206.6,994.7 2211.2,994.6 2215.3,994.0 2219.5,994.0 2224.7,993.1 2229.3,989.5 2234.2,989.3 2240.9,990.4 2248.0,992.1 2255.1,994.1 2261.9,993.0 2268.7,989.9 2275.9,986.2 2280.4,986.7 2284.9,985.0 2289.7,984.0 2294.4,981.0 2298.8,980.8 2303.1,979.9 2308.7,982.2 2313.7,982.8 2318.8,985.0" fill="none" stroke="#e8d800" stroke-width="1.4" stroke-linejoin="round" opacity="1"/><polyline points="720.4,960.9 725.5,960.8 730.7,960.5 735.1,963.8 739.4,974.5 742.0,989.3 745.5,998.6 751.4,992.1 758.4,974.7 762.4,968.9 766.4,962.2 773.8,954.0 777.8,951.9 781.8,949.7 789.4,947.3 796.1,952.5 802.3,959.4 808.2,964.7 811.7,964.2 815.0,963.6 818.6,962.8 824.1,959.9 830.0,957.7 835.3,956.6 839.2,960.4 842.4,964.0 845.8,968.9 849.1,972.1 852.6,974.4 856.2,976.5 862.5,984.4 869.1,994.7 875.0,999.0 879.5,992.8 883.2,979.2 887.5,968.9 891.5,962.5 895.8,959.7 900.1,957.6 903.6,956.5 907.1,959.2 910.5,962.0 914.0,964.7 917.2,970.1 921.0,975.4 926.6,978.6 933.1,984.2 939.8,986.3 946.6,988.3 953.7,988.6 960.7,986.5 967.7,984.4 974.7,982.4 981.5,983.0 988.8,987.0 995.8,994.7 1002.4,998.6 1009.6,990.9 1016.1,974.4 1023.3,961.8 1029.5,956.9 1036.1,951.8 1042.1,951.8 1046.7,954.0 1050.7,960.7 1054.6,967.1 1057.9,969.7 1061.1,975.0 1065.1,978.9 1072.0,982.0 1076.1,983.8 1080.2,986.9 1088.1,988.1 1095.9,984.3 1103.4,981.9 1106.9,980.7 1105.2,980.5 1101.8,983.2 1100.0,983.1 1101.6,982.3 1105.0,980.3 1108.4,978.9 1111.0,981.0 1113.6,983.0 1116.7,985.8 1122.0,986.0 1128.0,983.1 1133.4,981.8 1136.4,983.1 1139.0,986.6 1141.8,987.2 1145.6,985.8 1149.8,986.1 1154.3,984.7 1160.3,986.6 1166.6,989.0 1173.1,991.2 1180.0,990.0 1187.0,987.6 1194.0,987.4 1201.1,986.7 1208.2,989.3 1214.9,989.3 1219.9,992.4 1224.7,994.2 1229.5,994.4 1235.0,993.7 1240.6,990.6 1246.2,989.7 1252.2,988.5 1258.2,987.7 1262.9,988.0 1264.5,985.1 1265.6,982.9 1267.1,982.6 1270.0,982.6 1273.5,985.7 1277.5,986.4 1284.5,986.5 1288.5,983.7 1292.6,981.7 1300.5,981.8 1306.7,981.1 1312.7,984.7 1319.3,986.0 1324.3,984.5 1329.4,982.5 1334.9,981.1 1340.4,979.9 1345.6,979.4 1350.7,978.9 1357.7,980.2 1364.2,980.4 1371.5,981.2 1376.0,982.3 1380.4,981.6 1384.9,981.8 1389.9,982.8 1394.9,983.1 1399.9,981.9 1404.4,982.7 1408.8,983.3 1413.3,983.4 1420.8,982.5 1427.5,983.3 1434.2,982.2 1441.3,985.4 1448.3,988.2 1455.1,990.0 1461.0,988.7 1466.7,986.4 1471.8,984.1 1475.5,982.7 1478.7,979.0 1482.2,977.0 1487.3,971.9 1492.7,969.2 1496.9,965.6 1498.1,964.9 1499.0,965.3 1500.0,966.1 1501.4,967.2 1502.9,968.3 1504.2,969.7 1506.2,977.1 1507.9,986.0 1510.4,994.3 1512.9,997.1 1515.8,1000.8 1518.8,1000.8 1521.6,1003.2 1524.5,1002.7 1527.2,1000.8 1530.3,997.4 1533.0,992.7 1535.5,987.9 1538.4,978.4 1541.0,967.6 1543.9,960.2 1546.5,954.5 1549.3,949.2 1552.2,947.8 1554.9,949.0 1557.8,951.1 1560.6,956.2 1564.6,963.2 1568.6,972.2 1573.1,979.0 1576.3,979.6 1579.8,981.4 1583.6,981.6 1589.7,984.2 1596.7,984.3 1604.4,986.7 1608.7,987.1 1612.9,987.4 1617.2,988.5 1622.0,987.2 1626.9,988.8 1631.7,989.3 1636.5,989.8 1641.4,989.6 1646.2,989.3 1650.8,989.8 1655.5,990.8 1660.1,990.2 1664.8,990.0 1669.4,990.7 1674.1,991.0 1678.7,991.2 1683.4,990.3 1688.0,991.9 1692.7,991.0 1697.4,992.0 1702.1,990.5 1706.8,992.5 1711.4,991.9 1716.1,992.8 1720.7,992.9 1725.2,992.8 1729.8,991.5 1733.9,992.4 1737.9,992.6 1742.0,994.1 1748.0,993.6 1753.9,994.4 1759.6,994.5 1765.3,994.7 1769.9,995.9 1774.5,995.6 1778.8,993.5 1783.2,993.5 1787.8,992.1 1792.4,991.3 1798.3,989.8 1804.2,989.1 1808.3,987.4 1812.5,986.6 1816.6,986.2 1822.2,985.5 1827.9,986.0 1832.0,989.0 1836.0,989.2 1843.3,995.3 1850.9,1000.2 1855.1,998.1 1859.2,997.8 1863.5,997.2 1867.7,994.9 1871.8,992.4 1876.0,990.4 1883.8,988.7 1891.4,986.8 1896.9,986.7 1898.1,987.0 1898.9,986.6 1900.0,986.8 1902.9,987.3 1906.4,987.7 1910.4,987.9 1917.5,986.4 1921.5,983.4 1925.6,982.5 1933.4,981.4 1940.1,983.4 1946.4,985.9 1952.2,988.9 1956.7,994.6 1960.6,999.1 1964.7,1001.1 1970.8,996.9 1977.2,987.9 1983.5,978.9 1989.1,969.6 1994.5,960.1 2000.3,955.2 2007.1,960.1 2014.2,969.6 2021.1,977.0 2025.1,980.2 2029.0,981.1 2033.7,983.3 2038.6,983.9 2043.5,983.5 2049.3,984.7 2055.1,984.4 2059.1,984.7 2063.1,985.1 2067.1,985.5 2071.8,985.7 2076.5,985.4 2081.2,984.3 2086.1,984.9 2091.0,984.3 2095.9,983.5 2100.2,984.8 2104.6,984.8 2108.9,985.7 2116.2,986.3 2122.7,989.6 2129.7,990.2 2134.8,989.0 2140.0,989.8 2145.6,987.9 2151.1,987.3 2156.1,985.2 2161.1,984.0 2167.1,984.0 2172.5,980.5 2177.8,980.1 2182.6,981.7 2187.3,984.4 2192.4,987.7 2199.1,987.7 2206.2,985.5 2213.3,984.8 2220.3,988.7 2227.2,992.2 2234.2,994.7 2241.1,996.7 2248.1,995.9 2255.1,994.9 2261.8,993.3 2268.4,991.0 2275.9,988.6 2280.3,989.0 2284.6,989.1 2289.0,988.0 2294.0,986.8 2298.9,988.0 2303.9,986.5 2308.9,987.3 2313.8,988.0 2318.8,987.1" fill="none" stroke="#10d0e0" stroke-width="1.4" stroke-linejoin="round" opacity="1"/><polyline points="720.4,908.7 724.6,920.4 728.8,914.8 735.1,922.2 739.3,924.7 743.5,927.2 747.6,928.7 751.8,931.7 758.0,934.8 762.9,934.2 767.8,931.8 772.7,931.3 776.9,927.0 781.0,924.5 785.2,920.4 789.4,915.2 793.5,917.1 797.7,917.0 802.7,916.4 807.7,916.3 812.6,915.4 817.6,916.1 820.7,972.5 824.7,973.6 828.7,972.6 832.7,972.9 836.7,973.0 840.7,972.6 844.7,973.5 846.8,900.3 849.9,898.2 856.2,906.3 860.4,907.7 864.5,910.1 868.7,911.9 872.9,914.3 877.1,916.0 881.3,914.1 885.5,913.9 889.6,912.4 893.8,909.8 895.9,974.2 900.1,973.9 904.3,973.1 908.4,973.0 912.6,973.1 916.8,972.6 921.0,974.0 925.2,973.3 929.3,974.2 933.5,973.3 937.7,974.4 941.9,974.2 946.1,972.5 950.2,972.9 954.4,974.3 958.6,973.4 962.8,974.5 967.0,973.3 971.1,972.6 975.3,973.8 979.5,973.5 981.5,906.2 987.8,901.0 994.1,911.1 998.2,913.7 1002.4,917.0 1006.6,917.5 1010.8,917.0 1014.9,918.1 1019.1,918.7 1023.3,919.4 1027.5,919.2 1031.7,916.3 1035.8,915.4 1040.0,913.5 1044.2,911.3 1048.7,911.3 1053.1,909.1 1057.6,909.1 1062.1,907.0 1066.6,906.5 1071.0,905.1 1075.5,904.6 1077.6,973.0 1081.8,974.4 1086.0,974.1 1090.2,973.1 1094.3,974.3 1098.5,972.9 1102.7,973.3 1106.9,974.2 1100.0,973.8 1104.0,972.7 1108.1,974.4 1112.1,972.8 1116.2,972.9 1120.2,973.8 1124.3,972.9 1128.3,972.8 1132.3,972.3 1136.4,972.3 1140.4,973.3 1144.5,972.5 1148.5,973.2 1152.6,972.7 1156.6,972.9 1160.7,973.8 1164.7,972.8 1168.7,973.0 1172.8,973.5 1176.8,972.1 1180.9,972.0 1184.9,973.5 1189.0,973.3 1193.0,972.1 1197.0,971.9 1201.1,973.0 1205.1,973.3 1209.2,971.8 1213.2,973.3 1217.3,973.1 1221.3,972.5 1225.4,972.1 1229.4,971.4 1233.4,971.3 1237.5,973.1 1241.5,971.6 1245.6,972.5 1249.6,971.5 1253.7,972.6 1257.7,972.1 1261.7,971.5 1265.8,971.2 1269.8,972.3 1273.9,970.9 1277.9,971.2 1282.0,971.8 1286.0,972.4 1290.0,971.9 1294.1,971.2 1298.1,972.4 1302.2,970.9 1306.2,970.5 1310.3,971.0 1314.3,971.3 1318.4,970.5 1322.4,970.7 1326.4,971.0 1330.5,971.4 1334.5,970.5 1338.6,970.9 1342.6,971.9 1346.7,972.0 1350.7,971.3 1354.7,971.4 1358.8,971.1 1362.8,970.2 1366.9,969.9 1370.9,969.9 1375.0,971.6 1379.0,971.2 1383.1,971.6 1387.1,969.7 1391.1,970.9 1395.2,970.6 1399.2,971.0 1403.3,970.2 1407.3,971.5 1411.4,969.6 1415.4,970.4 1419.6,945.3 1421.7,895.3 1425.8,905.6 1431.1,886.8 1434.2,916.6 1438.4,911.7 1442.6,906.1 1446.7,893.1 1450.9,916.1 1455.1,891.0 1459.3,916.1 1463.4,888.9 1467.6,916.1 1471.8,893.1 1476.0,916.1 1478.1,893.1 1480.2,915.0 1482.2,966.2 1484.3,995.9 1489.5,991.9 1494.8,987.1 1496.9,1000.4 1500.0,995.2 1504.2,997.5 1508.4,999.6 1512.5,1001.2 1516.7,1002.0 1520.9,1004.4 1525.1,1005.8 1529.3,1006.5 1533.4,1007.8 1537.6,1008.6 1541.8,1010.3 1546.0,1010.9 1550.2,1010.5 1554.3,1012.2 1558.5,1013.6 1562.7,1014.0 1566.9,1013.0 1571.1,1011.7 1575.2,1011.8 1579.4,1010.9 1583.6,1010.0 1587.8,1009.7 1591.9,1007.2 1596.1,1007.5 1600.2,1005.0 1604.4,1005.1 1608.6,1003.8 1612.8,1002.2 1616.9,1002.1 1621.1,1000.7 1625.3,999.8 1629.5,999.6 1633.7,997.5 1637.8,996.2 1642.0,995.9 1646.2,995.9 1650.7,993.8 1655.1,992.7 1659.6,993.1 1664.1,991.6 1668.6,990.1 1673.0,989.9 1677.5,987.8 1682.0,987.7 1686.5,986.0 1691.0,985.7 1695.4,985.7 1699.9,985.2 1704.4,984.4 1708.9,982.7 1713.1,982.2 1717.3,980.9 1721.4,979.7 1725.6,979.5 1729.8,979.4 1734.0,977.9 1738.2,976.2 1742.3,975.2 1746.5,972.4 1750.7,970.7 1755.2,969.7 1759.6,967.7 1764.1,965.9 1768.6,964.7 1773.1,963.4 1777.5,961.5 1782.0,959.5 1786.2,959.3 1790.4,958.4 1794.5,956.1 1798.7,954.1 1802.9,952.8 1808.1,951.3 1813.3,946.5 1817.5,943.3 1821.6,938.5 1825.8,933.4 1830.0,930.2 1834.2,924.5 1838.4,920.6 1842.6,920.4 1846.8,918.8 1850.9,919.6 1855.1,917.7 1859.3,917.3 1863.5,916.9 1867.6,917.8 1871.8,917.2 1876.0,917.4 1880.2,917.2 1884.4,917.3 1888.5,917.4 1892.7,916.7 1896.9,915.5 1900.0,916.1 1904.7,914.9 1909.4,915.0 1910.4,972.5 1914.8,973.4 1919.1,973.9 1923.5,972.9 1927.8,973.0 1932.2,973.2 1936.5,973.5 1938.6,910.2 1942.8,903.5 1949.1,914.2 1954.3,907.7 1955.3,920.8 1960.6,916.9 1964.8,923.4 1968.9,929.4 1973.8,929.9 1978.6,933.7 1983.5,935.3 1987.7,934.9 1991.9,936.2 1996.1,937.3 2000.3,936.3 2004.5,933.8 2008.6,932.7 2012.8,931.8 2017.0,930.2 2021.2,929.9 2025.3,928.4 2029.5,928.1 2033.7,926.7 2037.9,927.1 2042.0,926.7 2046.2,925.8 2050.7,925.5 2055.1,924.0 2059.6,924.9 2064.1,924.6 2068.6,924.2 2073.0,922.8 2077.5,922.9 2081.7,920.3 2085.9,919.8 2090.0,918.0 2094.2,915.4 2098.4,913.2 2102.6,912.2 2106.8,910.7 2110.9,909.5 2115.1,907.3 2119.3,904.7 2123.5,906.7 2126.6,974.1 2130.6,972.6 2134.6,974.0 2138.6,972.7 2142.6,973.0 2146.6,973.9 2150.6,972.5 2154.6,972.5 2158.6,973.2 2162.6,973.6 2166.6,973.7 2170.6,973.4 2174.7,973.9 2178.7,972.9 2182.7,973.8 2186.7,972.0 2190.7,972.2 2194.7,972.8 2198.7,972.3 2202.7,973.1 2206.7,972.9 2210.7,972.6 2214.7,973.2 2218.7,972.6 2222.7,972.1 2226.7,972.2 2230.7,973.1 2234.7,973.1 2238.7,971.7 2242.7,972.9 2246.7,973.1 2250.7,972.2 2254.7,972.2 2258.7,971.5 2262.7,972.1 2266.7,972.0 2270.8,972.1 2274.8,970.9 2278.8,972.8 2282.8,971.8 2286.8,971.6 2290.8,972.3 2294.8,971.8 2298.8,971.6 2302.8,972.0 2306.8,970.7 2310.8,971.6 2314.8,971.3 2318.8,971.4" fill="none" stroke="#00e400" stroke-width="1.5" stroke-linejoin="round" opacity="1"/><polyline points="719,1427.5 2320,1427.5" fill="none" stroke="#1a50c8" stroke-width="2" stroke-linejoin="round" opacity="1"/><path d="M1519.5,222.9V1428.0" stroke="#d8d8d8" stroke-width="1.3"/></svg>
<svg class="a" style="left:0;top:0" width="2463" height="1470" viewBox="0 0 2463 1470"><rect x="842.5" y="1437" width="244" height="24" fill="#a8a8a8"/><polyline points="79.0,1448.0 86.5,1450.0 113.9,1450.0 121.4,1437.5 126.3,1440.5 132.6,1449.5 146.3,1443.8 171.2,1438.8 203.6,1438.2 207.3,1440.0 218.5,1438.8 248.4,1436.2 253.4,1441.2 260.9,1446.8 268.4,1446.2 290.8,1441.2 328.2,1438.8 365.6,1440.0 400.5,1440.5 415.4,1448.0 452.8,1448.2 456.5,1452.0 490.2,1446.2 500.1,1445.5 505.1,1449.0 540.0,1447.0 557.4,1447.5 559.9,1448.8 612.3,1449.2 617.3,1442.5 622.2,1443.8 627.2,1449.5 652.1,1447.0 667.1,1444.5 679.0,1444.5 689.0,1448.8 694.0,1446.2 698.9,1448.0 753.8,1446.2 828.5,1447.5 842.5,1447.0 903.3,1446.8 940.6,1449.2 953.1,1452.0 964.3,1452.5 1002.9,1447.5 1027.9,1446.2 1065.2,1447.5 1077.7,1449.2 1140.0,1449.2 1147.5,1445.5 1152.5,1448.0 1157.4,1455.8 1202.3,1446.8 1214.8,1446.8 1222.2,1449.2 1228.5,1444.2 1233.4,1449.2 1279.0,1447.0 1289.0,1446.5 1294.0,1448.2 1328.8,1447.5 1341.3,1449.5 1403.6,1449.2 1473.4,1447.5 1478.4,1449.0 1503.3,1449.5 1513.2,1450.8 1528.2,1450.8 1530.7,1453.8 1540.6,1453.0 1553.1,1451.2 1590.5,1447.5 1622.9,1446.5 1627.9,1447.5 1640.3,1447.5 1665.2,1451.2 1690.2,1451.2 1727.5,1447.5 1752.5,1447.0 1777.4,1446.8 1879.0,1446.2 1898.6,1446.6 1961.2,1446.6 1980.7,1448.0 2002.2,1451.5 2015.9,1451.9 2035.5,1450.5 2055.1,1448.0 2074.6,1446.6 2094.2,1446.4 2117.7,1447.0 2125.5,1450.1 2152.9,1450.1 2211.6,1450.1 2221.3,1451.1 2237.0,1450.5 2246.8,1439.8 2250.7,1442.7 2256.5,1460.3 2272.2,1460.3" fill="none" stroke="#e02828" stroke-width="1.4"/><rect x="842.5" y="1437" width="244" height="24" fill="#c0c0c0" opacity="0.35"/><rect x="964" y="1437" width="1.3" height="24" fill="#fff"/><rect x="2272" y="1437" width="1.5" height="24" fill="#fff"/></svg>
<div class="t" style="left:2277.0px;top:1444.2px;font-size:10px;color:#2a2a2a;font-weight:400;letter-spacing:0px;">00:01:48.848</div>
<svg class="a" style="left:0;top:0" width="2463" height="1567" viewBox="0 0 2463 1567"><path d="M156.7,81.6L159.4,115.5" stroke="#00a6f0" stroke-width="5.2" stroke-linecap="round"/><path d="M341.4,86L335.4,132.5" stroke="#00a6f0" stroke-width="5.2" stroke-linecap="round"/><path d="M831.7,84.3L788.3,368" stroke="#00a6f0" stroke-width="5.2" stroke-linecap="round"/><path d="M2342.7,229.2L2371.4,227.9" stroke="#00a6f0" stroke-width="5.2" stroke-linecap="round"/><path d="M2340.7,308.8L2358.3,313.4" stroke="#00a6f0" stroke-width="5.2" stroke-linecap="round"/><path d="M831.5,1445.6L837.3,1481.3" stroke="#00a6f0" stroke-width="5.2" stroke-linecap="round"/><path d="M56.5,303.2L83.5,303.2" stroke="#00a6f0" stroke-width="5.2" stroke-linecap="round"/></svg>
<div class="t" style="left:137.4px;top:13.6px;font-size:75.9px;font-weight:700;color:#000;transform:scaleX(0.560);transform-origin:0 0">1</div>
<div class="t" style="left:325.5px;top:19.4px;font-size:75.1px;font-weight:700;color:#000;transform:scaleX(0.793);transform-origin:0 0">2</div>
<div class="t" style="left:815.1px;top:13.8px;font-size:74.5px;font-weight:700;color:#000;transform:scaleX(0.754);transform-origin:0 0">3</div>
<div class="t" style="left:2376.7px;top:180.5px;font-size:75.7px;font-weight:700;color:#000;transform:scaleX(0.766);transform-origin:0 0">4</div>
<div class="t" style="left:2363.1px;top:274.2px;font-size:73.6px;font-weight:700;color:#000;transform:scaleX(0.783);transform-origin:0 0">5</div>
<div class="t" style="left:827.3px;top:1476.8px;font-size:74.6px;font-weight:700;color:#000;transform:scaleX(0.834);transform-origin:0 0">6</div>
<div class="t" style="left:24.6px;top:265.9px;font-size:75.1px;font-weight:700;color:#000;transform:scaleX(0.798);transform-origin:0 0">7</div>
</body></html>
